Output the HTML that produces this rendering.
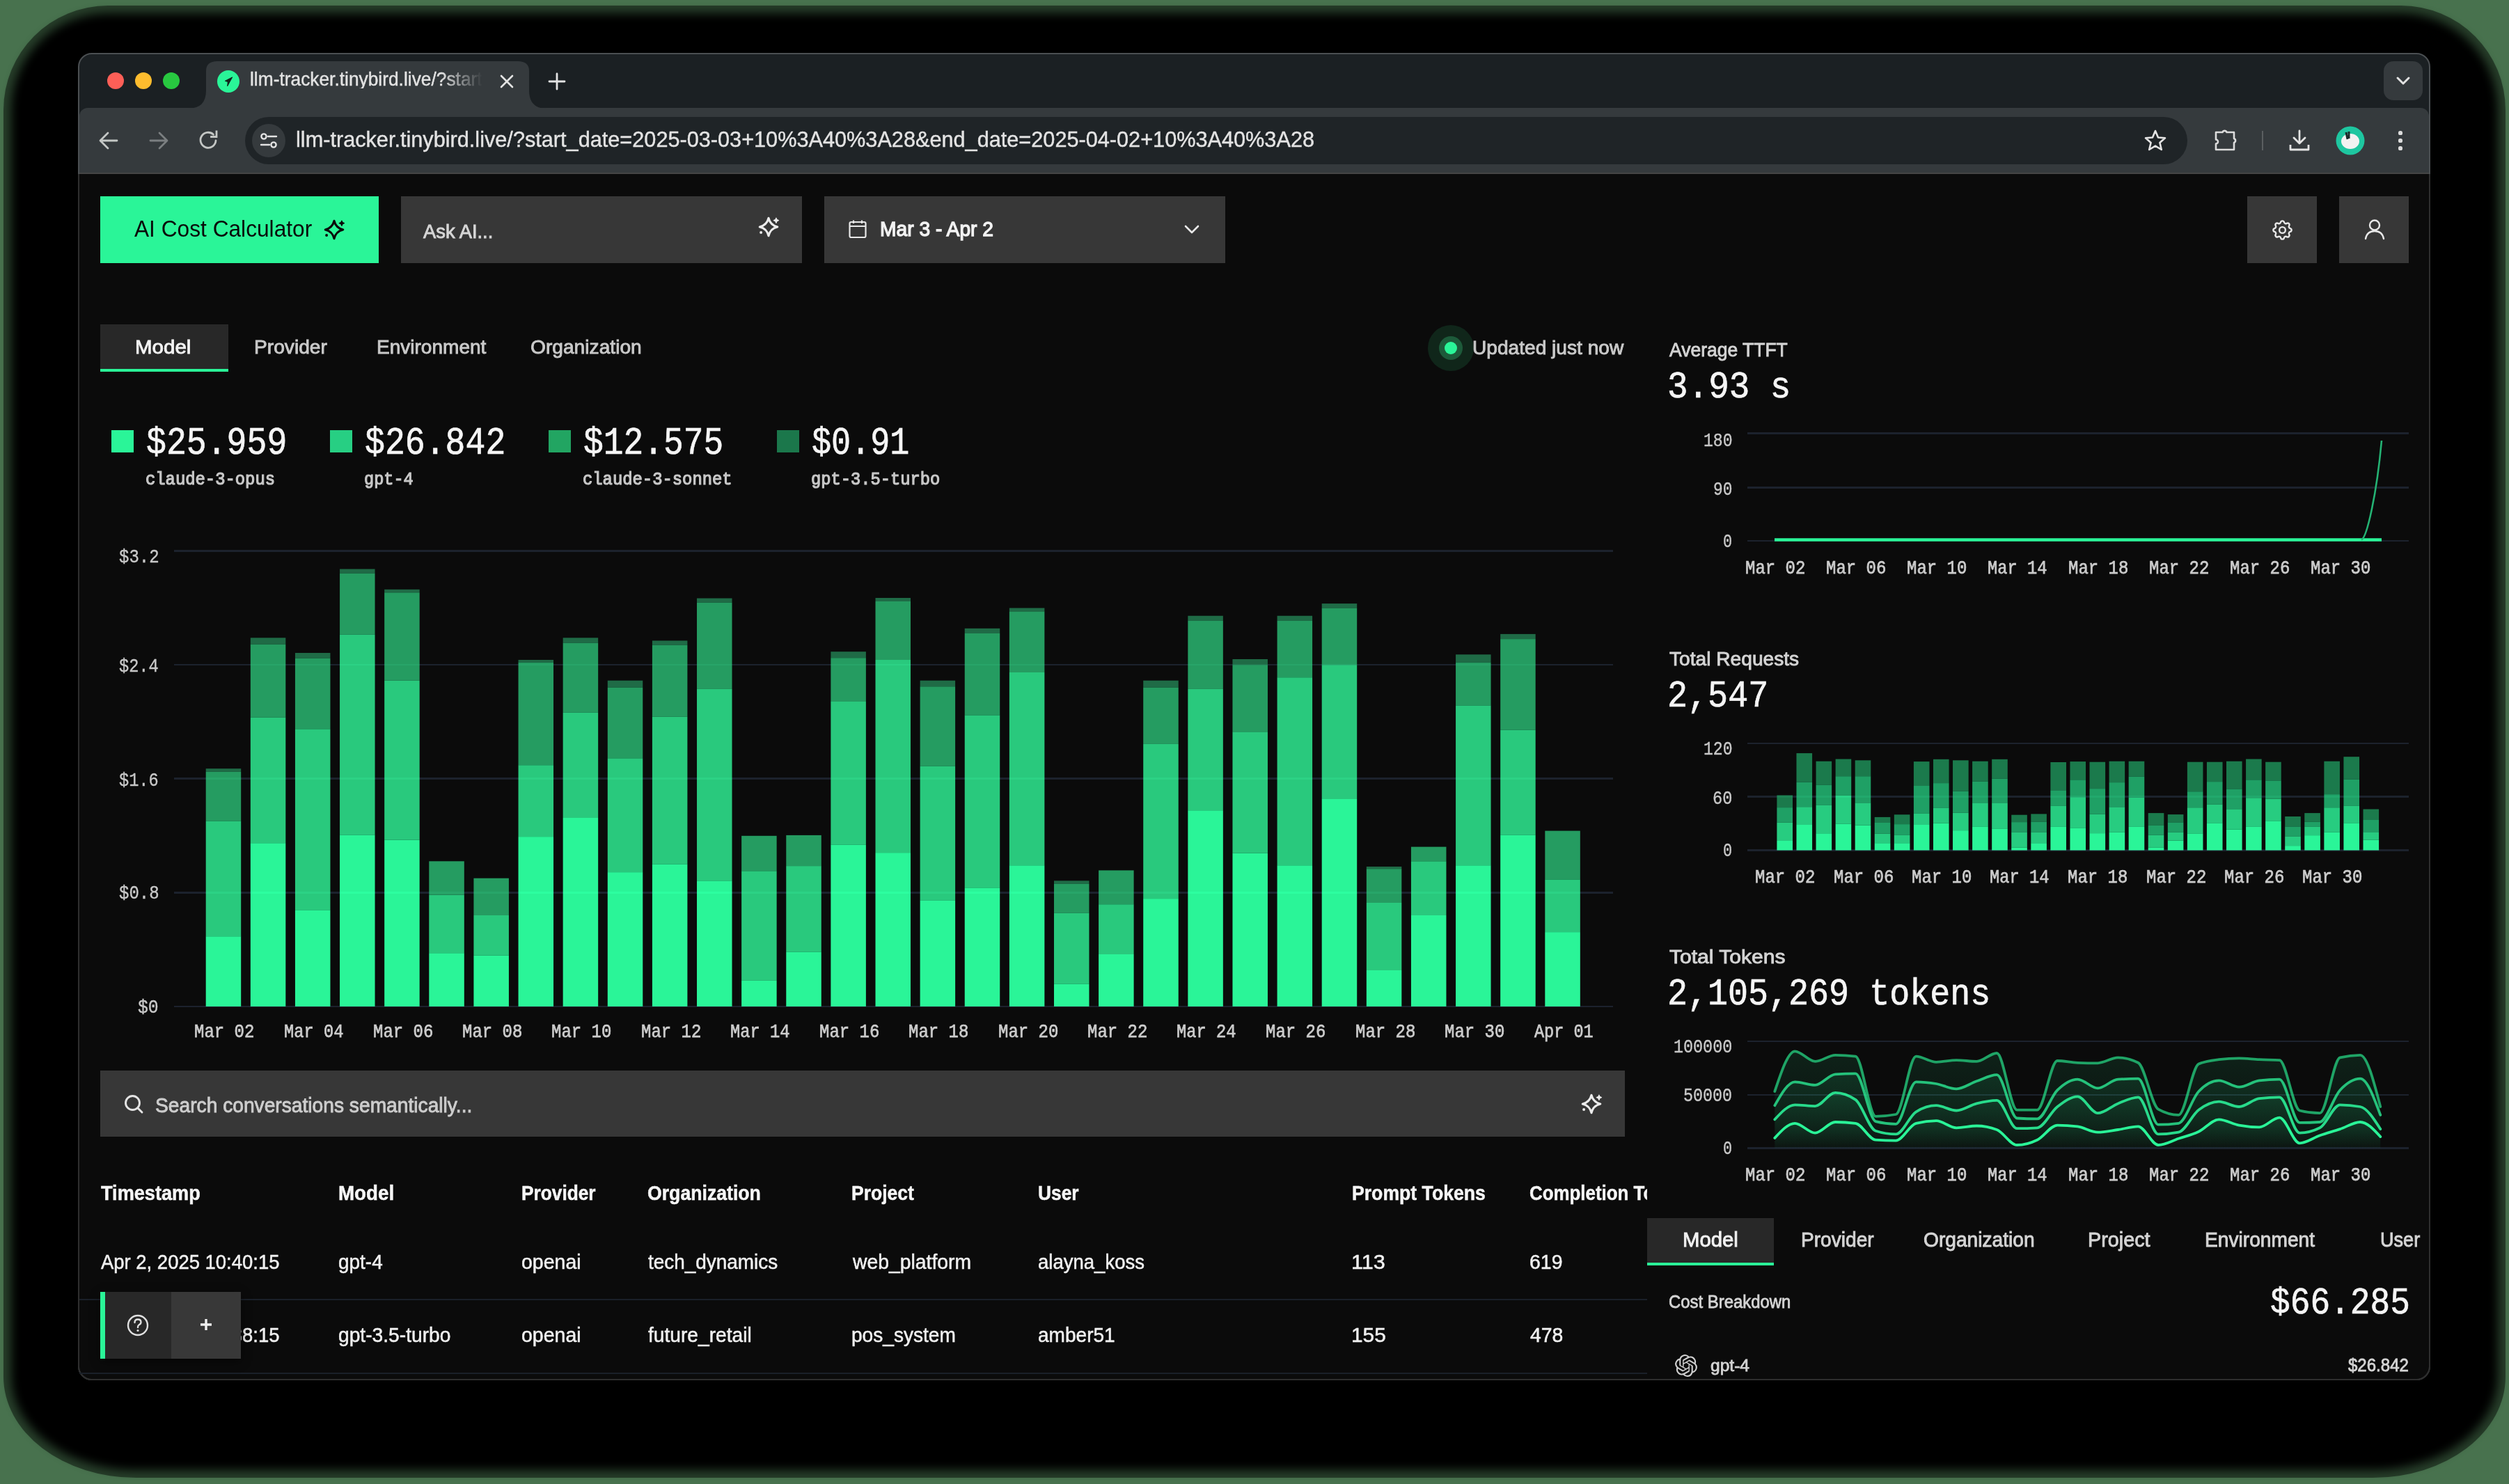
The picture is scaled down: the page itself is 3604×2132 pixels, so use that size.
<!DOCTYPE html>
<html><head><meta charset="utf-8"><title>LLM Tracker</title>
<style>
html,body{margin:0;padding:0;}
body{width:3604px;height:2132px;position:relative;overflow:hidden;background:#48724e;}
</style></head><body>
<div style="position:absolute;left:4.85px;top:8.4px;width:3594.3px;height:2114.6px;background:rgba(0,0,0,0.45);border-radius:150px 150px 190px 190px / 150px 150px 145px 145px"></div>
<div style="position:absolute;left:15.85px;top:19.4px;width:3572.3px;height:2092.6px;background:#000;border-radius:139px 139px 179px 179px / 139px 139px 134px 134px;filter:blur(7px)"></div>
<div style="position:absolute;left:112px;top:76px;width:3379px;height:1907px;background:#1b2023;border-radius:20px;box-sizing:border-box;border:2px solid #4b4f52;overflow:hidden"><div style="position:absolute;left:0;top:77px;right:0;height:95px;background:#353a3d;border-radius:12px 12px 0 0"></div><div style="position:absolute;left:0;top:170px;right:0;height:2px;background:#454545"></div><div style="position:absolute;left:0;top:172px;right:0;bottom:0;background:#0b0b0b"></div></div>
<div style="position:absolute;left:112px;top:250px;width:3379px;height:1733px;box-sizing:border-box;border:2px solid #2e2e2e;border-top:none;border-radius:0 0 20px 20px"></div>
<svg style="position:absolute;left:270px;top:86px;" width="520" height="70" viewBox="0 0 520 70"><path d="M0 70 Q26 70 26 44 L26 16 Q26 2 42 2 L474 2 Q490 2 490 16 L490 44 Q490 70 516 70 Z" fill="#353a3d"/></svg>
<div style="position:absolute;left:154px;top:104px;width:24px;height:24px;border-radius:50%;background:#fe5f57"></div>
<div style="position:absolute;left:194px;top:104px;width:24px;height:24px;border-radius:50%;background:#febc2e"></div>
<div style="position:absolute;left:234px;top:104px;width:24px;height:24px;border-radius:50%;background:#28c840"></div>
<svg style="position:absolute;left:311px;top:99.5px;" width="34" height="34" viewBox="0 0 34 34"><circle cx="17" cy="17" r="16" fill="#2af598"/><path d="M22.7 10.9 L12.3 16.3 L16.3 17.6 L15.7 23.7 Z" fill="#12231b" stroke="#12231b" stroke-width="1" stroke-linejoin="round"/></svg>
<div style="position:absolute;left:359.01px;top:100.68px;font:400 26.72px/26.72px 'Liberation Sans', sans-serif;color:#e3e3e3;white-space:nowrap;transform:scaleX(0.9855);transform-origin:0 0;-webkit-mask-image:linear-gradient(90deg,#000 82%,transparent 100%);-webkit-text-stroke:0.4px #e3e3e3;">llm-tracker.tinybird.live/?start</div>
<svg style="position:absolute;left:716px;top:105px;" width="24" height="24" viewBox="0 0 24 24"><path d="M4 4 L20 20 M20 4 L4 20" stroke="#e3e3e3" stroke-width="2.6" stroke-linecap="round"/></svg>
<svg style="position:absolute;left:787px;top:104px;" width="26" height="26" viewBox="0 0 26 26"><path d="M13 2 V24 M2 13 H24" stroke="#e3e3e3" stroke-width="2.8" stroke-linecap="round"/></svg>
<div style="position:absolute;left:3424px;top:88px;width:56px;height:56px;background:#353a3d;border-radius:14px;"></div>
<svg style="position:absolute;left:3440px;top:106px;" width="24" height="20" viewBox="0 0 24 20"><path d="M4 6 L12 14 L20 6" stroke="#e3e3e3" stroke-width="3" fill="none" stroke-linecap="round" stroke-linejoin="round"/></svg>
<svg style="position:absolute;left:140px;top:186px;" width="32" height="32" viewBox="0 0 32 32"><path d="M28 16 H5 M15 5 L4 16 L15 27" stroke="#c4c7c5" stroke-width="2.8" fill="none" stroke-linecap="round" stroke-linejoin="round"/></svg>
<svg style="position:absolute;left:212px;top:186px;" width="32" height="32" viewBox="0 0 32 32"><path d="M4 16 H27 M17 5 L28 16 L17 27" stroke="#7b7f81" stroke-width="2.8" fill="none" stroke-linecap="round" stroke-linejoin="round"/></svg>
<svg style="position:absolute;left:284px;top:186px;" width="32" height="32" viewBox="0 0 32 32"><path d="M26 16 A11 11 0 1 1 22.5 7.2" stroke="#c4c7c5" stroke-width="2.8" fill="none" stroke-linecap="round"/><path d="M27 3 V10.5 H19.5" stroke="#c4c7c5" stroke-width="2.8" fill="none" stroke-linecap="square"/></svg>
<div style="position:absolute;left:352px;top:168px;width:2790px;height:68px;background:#1f2427;border-radius:34px;"></div>
<div style="position:absolute;left:362px;top:178px;width:48px;height:48px;border-radius:50%;background:#353a3d"></div>
<svg style="position:absolute;left:370px;top:186px;" width="32" height="32" viewBox="0 0 32 32"><circle cx="9" cy="10" r="3.6" stroke="#e3e3e3" stroke-width="2.4" fill="none"/><path d="M15 10 H27" stroke="#e3e3e3" stroke-width="2.4" stroke-linecap="round"/><circle cx="23" cy="22" r="3.6" stroke="#e3e3e3" stroke-width="2.4" fill="none"/><path d="M5 22 H17" stroke="#e3e3e3" stroke-width="2.4" stroke-linecap="round"/></svg>
<div style="position:absolute;left:425.03px;top:184.99px;font:400 31.08px/31.08px 'Liberation Sans', sans-serif;color:#e3e3e3;white-space:nowrap;transform:scaleX(0.9869);transform-origin:0 0;-webkit-text-stroke:0.4px #e3e3e3;">llm-tracker.tinybird.live/?start_date=2025-03-03+10%3A40%3A28&amp;end_date=2025-04-02+10%3A40%3A28</div>
<svg style="position:absolute;left:3078px;top:184px;" width="36" height="36" viewBox="0 0 36 36"><path d="M18 4 L22 13.5 L32 14.3 L24.4 21 L26.8 31 L18 25.6 L9.2 31 L11.6 21 L4 14.3 L14 13.5 Z" stroke="#e3e3e3" stroke-width="2.6" fill="none" stroke-linejoin="round"/></svg>
<svg style="position:absolute;left:3176px;top:182px;" width="40" height="40" viewBox="0 0 40 40"><path d="M7 8 H16.5 A3.2 3.2 0 0 1 22.5 8 H33 V17 A3.2 3.2 0 0 1 33 23 V33 H7 V24.5 A3 3 0 0 0 7 18.5 Z" stroke="#dcdcdc" stroke-width="2.6" fill="none" stroke-linejoin="round"/></svg>
<div style="position:absolute;left:3249px;top:188px;width:2px;height:28px;background:#5a5e60;border-radius:0px;"></div>
<svg style="position:absolute;left:3285px;top:184px;" width="36" height="36" viewBox="0 0 36 36"><path d="M18 4 V22 M10 14 L18 22 L26 14" stroke="#e3e3e3" stroke-width="2.8" fill="none" stroke-linecap="round" stroke-linejoin="round"/><path d="M5 24 V31 H31 V24" stroke="#e3e3e3" stroke-width="2.8" fill="none" stroke-linejoin="round"/></svg>
<svg style="position:absolute;left:3355px;top:181px;" width="42" height="42" viewBox="0 0 42 42"><circle cx="21" cy="21" r="20.5" fill="#1ec6a0"/><ellipse cx="21" cy="22" rx="13" ry="11" fill="#f2f2f2"/><path d="M15 9 L17 19 M19 8 L19 18" stroke="#1a2a2a" stroke-width="3"/></svg>
<div style="position:absolute;left:3445.4px;top:188.4px;width:5.2px;height:5.2px;border-radius:50%;background:#dcdcdc"></div>
<div style="position:absolute;left:3445.4px;top:199.4px;width:5.2px;height:5.2px;border-radius:50%;background:#dcdcdc"></div>
<div style="position:absolute;left:3445.4px;top:210.4px;width:5.2px;height:5.2px;border-radius:50%;background:#dcdcdc"></div>
<div style="position:absolute;left:144px;top:282px;width:400px;height:96px;background:#2af598;border-radius:0px;"></div>
<div style="position:absolute;left:193.00px;top:311.75px;font:400 33.72px/33.72px 'Liberation Sans', sans-serif;color:#0a0a0a;white-space:nowrap;transform:scaleX(0.9392);transform-origin:0 0;">AI Cost Calculator</div>
<svg style="position:absolute;left:459.9px;top:309.9px;" width="40" height="40" viewBox="0 0 40 40"><g transform="translate(20 20)"><path d="M0 -12.8 Q2.4 -2.4 12.8 0 Q2.4 2.4 0 12.8 Q-2.4 2.4 -12.8 0 Q-2.4 -2.4 0 -12.8 Z" stroke="#0a0a0a" stroke-width="3.0" fill="none" stroke-linejoin="round"/><path d="M0 -3.6 Q0.5 -0.5 3.6 0 Q0.5 0.5 0 3.6 Q-0.5 0.5 -3.6 0 Q-0.5 -0.5 0 -3.6 Z" transform="translate(10.9 -9.3)" fill="#0a0a0a" stroke="#0a0a0a" stroke-width="1.2" stroke-linejoin="round"/><circle cx="-10.9" cy="8.1" r="2" fill="#0a0a0a"/></g></svg>
<div style="position:absolute;left:576px;top:282px;width:576px;height:96px;background:#373737;border-radius:0px;"></div>
<div style="position:absolute;left:608.00px;top:317.83px;font:400 28.31px/28.31px 'Liberation Sans', sans-serif;color:#d6d6d6;white-space:nowrap;transform:scaleX(0.9663);transform-origin:0 0;-webkit-text-stroke:0.9px #d6d6d6;">Ask AI...</div>
<svg style="position:absolute;left:1083.9px;top:305.9px;" width="40" height="40" viewBox="0 0 40 40"><g transform="translate(20 20)"><path d="M0 -12.8 Q2.4 -2.4 12.8 0 Q2.4 2.4 0 12.8 Q-2.4 2.4 -12.8 0 Q-2.4 -2.4 0 -12.8 Z" stroke="#ececec" stroke-width="3.0" fill="none" stroke-linejoin="round"/><path d="M0 -3.6 Q0.5 -0.5 3.6 0 Q0.5 0.5 0 3.6 Q-0.5 0.5 -3.6 0 Q-0.5 -0.5 0 -3.6 Z" transform="translate(10.9 -9.3)" fill="#ececec" stroke="#ececec" stroke-width="1.2" stroke-linejoin="round"/><circle cx="-10.9" cy="8.1" r="2" fill="#ececec"/></g></svg>
<div style="position:absolute;left:1184px;top:282px;width:576px;height:96px;background:#373737;border-radius:0px;"></div>
<svg style="position:absolute;left:1218px;top:314px;" width="30" height="30" viewBox="0 0 30 30"><rect x="2.5" y="5" width="23" height="22" rx="2" stroke="#e8e8e8" stroke-width="2.2" fill="none"/><path d="M2.5 11 H25.5 M8 2.5 V7 M20 2.5 V7" stroke="#e8e8e8" stroke-width="2.2"/></svg>
<div style="position:absolute;left:1263.56px;top:315.24px;font:400 29.01px/29.01px 'Liberation Sans', sans-serif;color:#f2f2f2;white-space:nowrap;transform:scaleX(0.9724);transform-origin:0 0;-webkit-text-stroke:1.3px #f2f2f2;">Mar 3 - Apr 2</div>
<svg style="position:absolute;left:1700px;top:320px;" width="24" height="20" viewBox="0 0 24 20"><path d="M3 5 L12 14 L21 5" stroke="#e8e8e8" stroke-width="2.6" fill="none" stroke-linecap="round" stroke-linejoin="round"/></svg>
<div style="position:absolute;left:3228px;top:282px;width:100px;height:96px;background:#373737;border-radius:0px;"></div>
<svg style="position:absolute;left:3261.1px;top:312.5px;" width="35" height="35" viewBox="0 0 35 35"><g transform="scale(1.4583)"><path d="M10.325 4.317c.426 -1.756 2.924 -1.756 3.35 0a1.724 1.724 0 0 0 2.573 1.066c1.543 -.94 3.31 .826 2.37 2.37a1.724 1.724 0 0 0 1.065 2.572c1.756 .426 1.756 2.924 0 3.35a1.724 1.724 0 0 0 -1.066 2.573c.94 1.543 -.826 3.31 -2.37 2.37a1.724 1.724 0 0 0 -2.572 1.065c-.426 1.756 -2.924 1.756 -3.35 0a1.724 1.724 0 0 0 -2.573 -1.066c-1.543 .94 -3.31 -.826 -2.37 -2.37a1.724 1.724 0 0 0 -1.065 -2.572c-1.756 -.426 -1.756 -2.924 0 -3.35a1.724 1.724 0 0 0 1.066 -2.573c-.94 -1.543 .826 -3.31 2.37 -2.37c1 .608 2.296 .07 2.572 -1.065z" stroke="#e8e8e8" stroke-width="1.65" fill="none"/><circle cx="12" cy="12" r="3" stroke="#e8e8e8" stroke-width="1.65" fill="none"/></g></svg>
<div style="position:absolute;left:3360px;top:282px;width:100px;height:96px;background:#373737;border-radius:0px;"></div>
<svg style="position:absolute;left:3394px;top:312px;" width="34" height="34" viewBox="0 0 34 34"><circle cx="17" cy="11.5" r="7" stroke="#e8e8e8" stroke-width="2.4" fill="none"/><path d="M4 31 Q6 20 17 20 Q28 20 30 31" stroke="#e8e8e8" stroke-width="2.4" fill="none" stroke-linecap="round"/></svg>
<div style="position:absolute;left:144px;top:466px;width:184px;height:68px;background:#282828;border-radius:0px;"></div>
<div style="position:absolute;left:144px;top:530px;width:184px;height:4px;background:#2af598;border-radius:0px;"></div>
<div style="position:absolute;left:194.41px;top:484.33px;font:400 28.31px/28.31px 'Liberation Sans', sans-serif;color:#f2f2f2;white-space:nowrap;transform:scaleX(1.0436);transform-origin:0 0;-webkit-text-stroke:0.9px #f2f2f2;">Model</div>
<div style="position:absolute;left:365.01px;top:484.33px;font:400 28.31px/28.31px 'Liberation Sans', sans-serif;color:#c9c9c9;white-space:nowrap;transform:scaleX(0.9957);transform-origin:0 0;-webkit-text-stroke:0.9px #c9c9c9;">Provider</div>
<div style="position:absolute;left:540.52px;top:484.33px;font:400 28.31px/28.31px 'Liberation Sans', sans-serif;color:#c9c9c9;white-space:nowrap;transform:scaleX(0.9905);transform-origin:0 0;-webkit-text-stroke:0.9px #c9c9c9;">Environment</div>
<div style="position:absolute;left:762.00px;top:484.33px;font:400 28.31px/28.31px 'Liberation Sans', sans-serif;color:#c9c9c9;white-space:nowrap;transform:scaleX(0.9955);transform-origin:0 0;-webkit-text-stroke:0.9px #c9c9c9;">Organization</div>
<div style="position:absolute;left:2050.5px;top:467px;width:66px;height:66px;border-radius:50%;background:#10261a"></div>
<div style="position:absolute;left:2066.5px;top:483px;width:34px;height:34px;border-radius:50%;background:#1d5a3a"></div>
<div style="position:absolute;left:2074.5px;top:491px;width:18px;height:18px;border-radius:50%;background:#2af598"></div>
<div style="position:absolute;left:2114.98px;top:485.90px;font:400 27.88px/27.88px 'Liberation Sans', sans-serif;color:#c9c9c9;white-space:nowrap;transform:scaleX(1.0086);transform-origin:0 0;-webkit-text-stroke:0.9px #c9c9c9;">Updated just now</div>
<div style="position:absolute;left:160px;top:618px;width:32px;height:32px;background:#2af598;border-radius:0px;"></div>
<div style="position:absolute;left:209.62px;top:611.15px;font:400 54.63px/54.63px 'Liberation Mono', monospace;color:#f5f5f5;white-space:nowrap;transform:scaleX(0.8815);transform-origin:0 0;-webkit-text-stroke:0.7px #f5f5f5;">$25.959</div>
<div style="position:absolute;left:208.60px;top:676.16px;font:400 26.56px/26.56px 'Liberation Mono', monospace;color:#c8c8c8;white-space:nowrap;transform:scaleX(0.8983);transform-origin:0 0;-webkit-text-stroke:1.2px #c8c8c8;">claude-3-opus</div>
<div style="position:absolute;left:474px;top:618px;width:32px;height:32px;background:#27cf83;border-radius:0px;"></div>
<div style="position:absolute;left:523.62px;top:611.15px;font:400 54.63px/54.63px 'Liberation Mono', monospace;color:#f5f5f5;white-space:nowrap;transform:scaleX(0.8815);transform-origin:0 0;-webkit-text-stroke:0.7px #f5f5f5;">$26.842</div>
<div style="position:absolute;left:522.61px;top:676.16px;font:400 26.56px/26.56px 'Liberation Mono', monospace;color:#c8c8c8;white-space:nowrap;transform:scaleX(0.8878);transform-origin:0 0;-webkit-text-stroke:1.2px #c8c8c8;">gpt-4</div>
<div style="position:absolute;left:788px;top:618px;width:32px;height:32px;background:#22a562;border-radius:0px;"></div>
<div style="position:absolute;left:837.62px;top:611.15px;font:400 54.63px/54.63px 'Liberation Mono', monospace;color:#f5f5f5;white-space:nowrap;transform:scaleX(0.8776);transform-origin:0 0;-webkit-text-stroke:0.7px #f5f5f5;">$12.575</div>
<div style="position:absolute;left:836.60px;top:676.16px;font:400 26.56px/26.56px 'Liberation Mono', monospace;color:#c8c8c8;white-space:nowrap;transform:scaleX(0.8982);transform-origin:0 0;-webkit-text-stroke:1.2px #c8c8c8;">claude-3-sonnet</div>
<div style="position:absolute;left:1116px;top:618px;width:32px;height:32px;background:#1b774b;border-radius:0px;"></div>
<div style="position:absolute;left:1165.64px;top:611.15px;font:400 54.63px/54.63px 'Liberation Mono', monospace;color:#f5f5f5;white-space:nowrap;transform:scaleX(0.8567);transform-origin:0 0;-webkit-text-stroke:0.7px #f5f5f5;">$0.91</div>
<div style="position:absolute;left:1164.61px;top:676.16px;font:400 26.56px/26.56px 'Liberation Mono', monospace;color:#c8c8c8;white-space:nowrap;transform:scaleX(0.8939);transform-origin:0 0;-webkit-text-stroke:1.2px #c8c8c8;">gpt-3.5-turbo</div>
<div style="position:absolute;left:171.00px;top:786.79px;font:400 28.07px/28.07px 'Liberation Mono', monospace;color:#c8c8c8;white-space:nowrap;transform:scaleX(0.8547);transform-origin:0 0;-webkit-text-stroke:0.4px #c8c8c8;">$3.2</div>
<div style="position:absolute;left:171.00px;top:943.99px;font:400 28.07px/28.07px 'Liberation Mono', monospace;color:#c8c8c8;white-space:nowrap;transform:scaleX(0.8418);transform-origin:0 0;-webkit-text-stroke:0.4px #c8c8c8;">$2.4</div>
<div style="position:absolute;left:171.00px;top:1107.99px;font:400 28.07px/28.07px 'Liberation Mono', monospace;color:#c8c8c8;white-space:nowrap;transform:scaleX(0.8418);transform-origin:0 0;-webkit-text-stroke:0.4px #c8c8c8;">$1.6</div>
<div style="position:absolute;left:171.00px;top:1269.79px;font:400 28.07px/28.07px 'Liberation Mono', monospace;color:#c8c8c8;white-space:nowrap;transform:scaleX(0.8547);transform-origin:0 0;-webkit-text-stroke:0.4px #c8c8c8;">$0.8</div>
<div style="position:absolute;left:198.00px;top:1434.49px;font:400 28.07px/28.07px 'Liberation Mono', monospace;color:#c8c8c8;white-space:nowrap;transform:scaleX(0.8831);transform-origin:0 0;-webkit-text-stroke:0.4px #c8c8c8;">$0</div>
<div style="position:absolute;left:250px;top:790.25px;width:2067px;height:2.5px;background:rgb(25,25,37);border-radius:0px;"></div>
<div style="position:absolute;left:250px;top:953.85px;width:2067px;height:2.5px;background:rgb(25,25,37);border-radius:0px;"></div>
<div style="position:absolute;left:250px;top:1117.45px;width:2067px;height:2.5px;background:rgb(25,25,37);border-radius:0px;"></div>
<div style="position:absolute;left:250px;top:1281.05px;width:2067px;height:2.5px;background:rgb(25,25,37);border-radius:0px;"></div>
<div style="position:absolute;left:250px;top:1444.65px;width:2067px;height:2.5px;background:rgb(25,25,37);border-radius:0px;"></div>
<svg style="position:absolute;left:250px;top:780px;" width="2070" height="670" viewBox="0 0 2070 670"><rect x="45.70" y="324.20" width="50.5" height="4.50" fill="#1f6b46"/><rect x="45.70" y="328.70" width="50.5" height="70.80" fill="#259c61"/><rect x="45.70" y="399.50" width="50.5" height="165.70" fill="#29c97d"/><rect x="45.70" y="565.20" width="50.5" height="100.70" fill="#2af598"/><rect x="109.82" y="136.30" width="50.5" height="9.50" fill="#1f6b46"/><rect x="109.82" y="145.80" width="50.5" height="104.80" fill="#259c61"/><rect x="109.82" y="250.60" width="50.5" height="180.60" fill="#29c97d"/><rect x="109.82" y="431.20" width="50.5" height="234.70" fill="#2af598"/><rect x="173.94" y="158.00" width="50.5" height="7.70" fill="#1f6b46"/><rect x="173.94" y="165.70" width="50.5" height="101.60" fill="#259c61"/><rect x="173.94" y="267.30" width="50.5" height="260.00" fill="#29c97d"/><rect x="173.94" y="527.30" width="50.5" height="138.60" fill="#2af598"/><rect x="238.06" y="37.50" width="50.5" height="6.30" fill="#1f6b46"/><rect x="238.06" y="43.80" width="50.5" height="88.00" fill="#259c61"/><rect x="238.06" y="131.80" width="50.5" height="287.60" fill="#29c97d"/><rect x="238.06" y="419.40" width="50.5" height="246.50" fill="#2af598"/><rect x="302.18" y="66.80" width="50.5" height="4.50" fill="#1f6b46"/><rect x="302.18" y="71.30" width="50.5" height="126.40" fill="#259c61"/><rect x="302.18" y="197.70" width="50.5" height="228.90" fill="#29c97d"/><rect x="302.18" y="426.60" width="50.5" height="239.30" fill="#2af598"/><rect x="366.30" y="457.30" width="50.5" height="48.30" fill="#259c61"/><rect x="366.30" y="505.60" width="50.5" height="83.60" fill="#29c97d"/><rect x="366.30" y="589.20" width="50.5" height="76.70" fill="#2af598"/><rect x="430.42" y="481.70" width="50.5" height="53.30" fill="#259c61"/><rect x="430.42" y="535.00" width="50.5" height="57.80" fill="#29c97d"/><rect x="430.42" y="592.80" width="50.5" height="73.10" fill="#2af598"/><rect x="494.54" y="168.00" width="50.5" height="3.60" fill="#1f6b46"/><rect x="494.54" y="171.60" width="50.5" height="147.60" fill="#259c61"/><rect x="494.54" y="319.20" width="50.5" height="102.90" fill="#29c97d"/><rect x="494.54" y="422.10" width="50.5" height="243.80" fill="#2af598"/><rect x="558.66" y="136.30" width="50.5" height="7.30" fill="#1f6b46"/><rect x="558.66" y="143.60" width="50.5" height="100.20" fill="#259c61"/><rect x="558.66" y="243.80" width="50.5" height="151.20" fill="#29c97d"/><rect x="558.66" y="395.00" width="50.5" height="270.90" fill="#2af598"/><rect x="622.78" y="197.70" width="50.5" height="10.00" fill="#1f6b46"/><rect x="622.78" y="207.70" width="50.5" height="101.60" fill="#259c61"/><rect x="622.78" y="309.30" width="50.5" height="163.80" fill="#29c97d"/><rect x="622.78" y="473.10" width="50.5" height="192.80" fill="#2af598"/><rect x="686.90" y="140.40" width="50.5" height="6.30" fill="#1f6b46"/><rect x="686.90" y="146.70" width="50.5" height="103.00" fill="#259c61"/><rect x="686.90" y="249.70" width="50.5" height="211.70" fill="#29c97d"/><rect x="686.90" y="461.40" width="50.5" height="204.50" fill="#2af598"/><rect x="751.02" y="79.50" width="50.5" height="6.30" fill="#1f6b46"/><rect x="751.02" y="85.80" width="50.5" height="124.10" fill="#259c61"/><rect x="751.02" y="209.90" width="50.5" height="275.40" fill="#29c97d"/><rect x="751.02" y="485.30" width="50.5" height="180.60" fill="#2af598"/><rect x="815.14" y="420.80" width="50.5" height="50.50" fill="#259c61"/><rect x="815.14" y="471.30" width="50.5" height="157.60" fill="#29c97d"/><rect x="815.14" y="628.90" width="50.5" height="37.00" fill="#2af598"/><rect x="879.26" y="419.90" width="50.5" height="44.20" fill="#259c61"/><rect x="879.26" y="464.10" width="50.5" height="123.30" fill="#29c97d"/><rect x="879.26" y="587.40" width="50.5" height="78.50" fill="#2af598"/><rect x="943.38" y="156.20" width="50.5" height="9.00" fill="#1f6b46"/><rect x="943.38" y="165.20" width="50.5" height="62.80" fill="#259c61"/><rect x="943.38" y="228.00" width="50.5" height="205.40" fill="#29c97d"/><rect x="943.38" y="433.40" width="50.5" height="232.50" fill="#2af598"/><rect x="1007.50" y="79.00" width="50.5" height="5.00" fill="#1f6b46"/><rect x="1007.50" y="84.00" width="50.5" height="84.00" fill="#259c61"/><rect x="1007.50" y="168.00" width="50.5" height="277.10" fill="#29c97d"/><rect x="1007.50" y="445.10" width="50.5" height="220.80" fill="#2af598"/><rect x="1071.62" y="197.70" width="50.5" height="8.60" fill="#1f6b46"/><rect x="1071.62" y="206.30" width="50.5" height="114.20" fill="#259c61"/><rect x="1071.62" y="320.50" width="50.5" height="192.80" fill="#29c97d"/><rect x="1071.62" y="513.30" width="50.5" height="152.60" fill="#2af598"/><rect x="1135.74" y="122.80" width="50.5" height="7.20" fill="#1f6b46"/><rect x="1135.74" y="130.00" width="50.5" height="117.40" fill="#259c61"/><rect x="1135.74" y="247.40" width="50.5" height="247.90" fill="#29c97d"/><rect x="1135.74" y="495.30" width="50.5" height="170.60" fill="#2af598"/><rect x="1199.86" y="93.50" width="50.5" height="4.90" fill="#1f6b46"/><rect x="1199.86" y="98.40" width="50.5" height="87.60" fill="#259c61"/><rect x="1199.86" y="186.00" width="50.5" height="277.20" fill="#29c97d"/><rect x="1199.86" y="463.20" width="50.5" height="202.70" fill="#2af598"/><rect x="1263.98" y="485.30" width="50.5" height="4.60" fill="#1f6b46"/><rect x="1263.98" y="489.90" width="50.5" height="41.90" fill="#259c61"/><rect x="1263.98" y="531.80" width="50.5" height="101.60" fill="#29c97d"/><rect x="1263.98" y="633.40" width="50.5" height="32.50" fill="#2af598"/><rect x="1328.10" y="470.40" width="50.5" height="48.80" fill="#259c61"/><rect x="1328.10" y="519.20" width="50.5" height="71.80" fill="#29c97d"/><rect x="1328.10" y="591.00" width="50.5" height="74.90" fill="#2af598"/><rect x="1392.22" y="197.70" width="50.5" height="10.00" fill="#1f6b46"/><rect x="1392.22" y="207.70" width="50.5" height="81.20" fill="#259c61"/><rect x="1392.22" y="288.90" width="50.5" height="222.20" fill="#29c97d"/><rect x="1392.22" y="511.10" width="50.5" height="154.80" fill="#2af598"/><rect x="1456.34" y="104.70" width="50.5" height="6.80" fill="#1f6b46"/><rect x="1456.34" y="111.50" width="50.5" height="98.40" fill="#259c61"/><rect x="1456.34" y="209.90" width="50.5" height="174.30" fill="#29c97d"/><rect x="1456.34" y="384.20" width="50.5" height="281.70" fill="#2af598"/><rect x="1520.46" y="167.00" width="50.5" height="8.20" fill="#1f6b46"/><rect x="1520.46" y="175.20" width="50.5" height="96.10" fill="#259c61"/><rect x="1520.46" y="271.30" width="50.5" height="174.30" fill="#29c97d"/><rect x="1520.46" y="445.60" width="50.5" height="220.30" fill="#2af598"/><rect x="1584.58" y="104.70" width="50.5" height="6.80" fill="#1f6b46"/><rect x="1584.58" y="111.50" width="50.5" height="81.70" fill="#259c61"/><rect x="1584.58" y="193.20" width="50.5" height="270.00" fill="#29c97d"/><rect x="1584.58" y="463.20" width="50.5" height="202.70" fill="#2af598"/><rect x="1648.70" y="87.10" width="50.5" height="6.40" fill="#1f6b46"/><rect x="1648.70" y="93.50" width="50.5" height="81.70" fill="#259c61"/><rect x="1648.70" y="175.20" width="50.5" height="192.80" fill="#29c97d"/><rect x="1648.70" y="368.00" width="50.5" height="297.90" fill="#2af598"/><rect x="1712.82" y="465.00" width="50.5" height="3.20" fill="#1f6b46"/><rect x="1712.82" y="468.20" width="50.5" height="48.80" fill="#259c61"/><rect x="1712.82" y="517.00" width="50.5" height="97.00" fill="#29c97d"/><rect x="1712.82" y="614.00" width="50.5" height="51.90" fill="#2af598"/><rect x="1776.94" y="436.60" width="50.5" height="20.70" fill="#259c61"/><rect x="1776.94" y="457.30" width="50.5" height="77.70" fill="#29c97d"/><rect x="1776.94" y="535.00" width="50.5" height="130.90" fill="#2af598"/><rect x="1841.06" y="160.30" width="50.5" height="11.30" fill="#1f6b46"/><rect x="1841.06" y="171.60" width="50.5" height="61.80" fill="#259c61"/><rect x="1841.06" y="233.40" width="50.5" height="229.80" fill="#29c97d"/><rect x="1841.06" y="463.20" width="50.5" height="202.70" fill="#2af598"/><rect x="1905.18" y="130.90" width="50.5" height="7.20" fill="#1f6b46"/><rect x="1905.18" y="138.10" width="50.5" height="130.50" fill="#259c61"/><rect x="1905.18" y="268.60" width="50.5" height="150.80" fill="#29c97d"/><rect x="1905.18" y="419.40" width="50.5" height="246.50" fill="#2af598"/><rect x="1969.30" y="413.60" width="50.5" height="69.80" fill="#259c61"/><rect x="1969.30" y="483.40" width="50.5" height="75.70" fill="#29c97d"/><rect x="1969.30" y="559.10" width="50.5" height="106.80" fill="#2af598"/></svg>
<div style="position:absolute;left:250px;top:790.25px;width:2067px;height:2.5px;background:rgb(3,9,8);border-radius:0px;mix-blend-mode:plus-lighter;"></div>
<div style="position:absolute;left:250px;top:953.85px;width:2067px;height:2.5px;background:rgb(3,9,8);border-radius:0px;mix-blend-mode:plus-lighter;"></div>
<div style="position:absolute;left:250px;top:1117.45px;width:2067px;height:2.5px;background:rgb(3,9,8);border-radius:0px;mix-blend-mode:plus-lighter;"></div>
<div style="position:absolute;left:250px;top:1281.05px;width:2067px;height:2.5px;background:rgb(3,9,8);border-radius:0px;mix-blend-mode:plus-lighter;"></div>
<div style="position:absolute;left:250px;top:1444.65px;width:2067px;height:2.5px;background:rgb(3,9,8);border-radius:0px;mix-blend-mode:plus-lighter;"></div>
<div style="position:absolute;left:279.39px;top:1468.73px;font:400 27.77px/27.77px 'Liberation Mono', monospace;color:#cccccc;white-space:nowrap;transform:scaleX(0.8636);transform-origin:0 0;-webkit-text-stroke:0.75px #cccccc;">Mar 02</div>
<div style="position:absolute;left:407.64px;top:1468.73px;font:400 27.77px/27.77px 'Liberation Mono', monospace;color:#cccccc;white-space:nowrap;transform:scaleX(0.8548);transform-origin:0 0;-webkit-text-stroke:0.75px #cccccc;">Mar 04</div>
<div style="position:absolute;left:535.87px;top:1468.73px;font:400 27.77px/27.77px 'Liberation Mono', monospace;color:#cccccc;white-space:nowrap;transform:scaleX(0.8636);transform-origin:0 0;-webkit-text-stroke:0.75px #cccccc;">Mar 06</div>
<div style="position:absolute;left:664.11px;top:1468.73px;font:400 27.77px/27.77px 'Liberation Mono', monospace;color:#cccccc;white-space:nowrap;transform:scaleX(0.8636);transform-origin:0 0;-webkit-text-stroke:0.75px #cccccc;">Mar 08</div>
<div style="position:absolute;left:792.35px;top:1468.73px;font:400 27.77px/27.77px 'Liberation Mono', monospace;color:#cccccc;white-space:nowrap;transform:scaleX(0.8636);transform-origin:0 0;-webkit-text-stroke:0.75px #cccccc;">Mar 10</div>
<div style="position:absolute;left:920.59px;top:1468.73px;font:400 27.77px/27.77px 'Liberation Mono', monospace;color:#cccccc;white-space:nowrap;transform:scaleX(0.8636);transform-origin:0 0;-webkit-text-stroke:0.75px #cccccc;">Mar 12</div>
<div style="position:absolute;left:1048.84px;top:1468.73px;font:400 27.77px/27.77px 'Liberation Mono', monospace;color:#cccccc;white-space:nowrap;transform:scaleX(0.8548);transform-origin:0 0;-webkit-text-stroke:0.75px #cccccc;">Mar 14</div>
<div style="position:absolute;left:1177.07px;top:1468.73px;font:400 27.77px/27.77px 'Liberation Mono', monospace;color:#cccccc;white-space:nowrap;transform:scaleX(0.8636);transform-origin:0 0;-webkit-text-stroke:0.75px #cccccc;">Mar 16</div>
<div style="position:absolute;left:1305.31px;top:1468.73px;font:400 27.77px/27.77px 'Liberation Mono', monospace;color:#cccccc;white-space:nowrap;transform:scaleX(0.8636);transform-origin:0 0;-webkit-text-stroke:0.75px #cccccc;">Mar 18</div>
<div style="position:absolute;left:1433.55px;top:1468.73px;font:400 27.77px/27.77px 'Liberation Mono', monospace;color:#cccccc;white-space:nowrap;transform:scaleX(0.8636);transform-origin:0 0;-webkit-text-stroke:0.75px #cccccc;">Mar 20</div>
<div style="position:absolute;left:1561.79px;top:1468.73px;font:400 27.77px/27.77px 'Liberation Mono', monospace;color:#cccccc;white-space:nowrap;transform:scaleX(0.8636);transform-origin:0 0;-webkit-text-stroke:0.75px #cccccc;">Mar 22</div>
<div style="position:absolute;left:1690.04px;top:1468.73px;font:400 27.77px/27.77px 'Liberation Mono', monospace;color:#cccccc;white-space:nowrap;transform:scaleX(0.8548);transform-origin:0 0;-webkit-text-stroke:0.75px #cccccc;">Mar 24</div>
<div style="position:absolute;left:1818.27px;top:1468.73px;font:400 27.77px/27.77px 'Liberation Mono', monospace;color:#cccccc;white-space:nowrap;transform:scaleX(0.8636);transform-origin:0 0;-webkit-text-stroke:0.75px #cccccc;">Mar 26</div>
<div style="position:absolute;left:1946.51px;top:1468.73px;font:400 27.77px/27.77px 'Liberation Mono', monospace;color:#cccccc;white-space:nowrap;transform:scaleX(0.8636);transform-origin:0 0;-webkit-text-stroke:0.75px #cccccc;">Mar 28</div>
<div style="position:absolute;left:2074.75px;top:1468.73px;font:400 27.77px/27.77px 'Liberation Mono', monospace;color:#cccccc;white-space:nowrap;transform:scaleX(0.8636);transform-origin:0 0;-webkit-text-stroke:0.75px #cccccc;">Mar 30</div>
<div style="position:absolute;left:2203.85px;top:1468.73px;font:400 27.77px/27.77px 'Liberation Mono', monospace;color:#cccccc;white-space:nowrap;transform:scaleX(0.8462);transform-origin:0 0;-webkit-text-stroke:0.75px #cccccc;">Apr 01</div>
<div style="position:absolute;left:2398.00px;top:488.33px;font:400 28.31px/28.31px 'Liberation Sans', sans-serif;color:#d4d4d4;white-space:nowrap;transform:scaleX(0.9361);transform-origin:0 0;-webkit-text-stroke:0.9px #d4d4d4;">Average TTFT</div>
<div style="position:absolute;left:2395.22px;top:531.31px;font:400 53.11px/53.11px 'Liberation Mono', monospace;color:#f5f5f5;white-space:nowrap;transform:scaleX(0.9276);transform-origin:0 0;-webkit-text-stroke:0.7px #f5f5f5;">3.93 s</div>
<div style="position:absolute;left:2510px;top:621.45px;width:950px;height:2.5px;background:#1c222d;border-radius:0px;"></div>
<div style="position:absolute;left:2510px;top:699.15px;width:950px;height:2.5px;background:#1c222d;border-radius:0px;"></div>
<div style="position:absolute;left:2510px;top:775.95px;width:950px;height:2.5px;background:#1c222d;border-radius:0px;"></div>
<div style="position:absolute;left:2446.55px;top:620.07px;font:400 27.31px/27.31px 'Liberation Mono', monospace;color:#c8c8c8;white-space:nowrap;transform:scaleX(0.8468);transform-origin:0 0;-webkit-text-stroke:0.4px #c8c8c8;">180</div>
<div style="position:absolute;left:2460.76px;top:689.87px;font:400 27.31px/27.31px 'Liberation Mono', monospace;color:#c8c8c8;white-space:nowrap;transform:scaleX(0.8361);transform-origin:0 0;-webkit-text-stroke:0.4px #c8c8c8;">90</div>
<div style="position:absolute;left:2475.00px;top:765.07px;font:400 27.31px/27.31px 'Liberation Mono', monospace;color:#c8c8c8;white-space:nowrap;transform:scaleX(0.8000);transform-origin:0 0;-webkit-text-stroke:0.4px #c8c8c8;">0</div>
<svg style="position:absolute;left:2500px;top:600px;" width="960" height="200" viewBox="0 0 960 200"><path d="M49 175.5 L921 175.5" stroke="#2af598" stroke-width="4.5" fill="none"/><path d="M892 175.5 C900 172 914 110 921 33" stroke="#24b374" stroke-width="2.6" fill="none"/></svg>
<div style="position:absolute;left:2507.34px;top:803.03px;font:400 27.77px/27.77px 'Liberation Mono', monospace;color:#cccccc;white-space:nowrap;transform:scaleX(0.8636);transform-origin:0 0;-webkit-text-stroke:0.75px #cccccc;">Mar 02</div>
<div style="position:absolute;left:2623.24px;top:803.03px;font:400 27.77px/27.77px 'Liberation Mono', monospace;color:#cccccc;white-space:nowrap;transform:scaleX(0.8636);transform-origin:0 0;-webkit-text-stroke:0.75px #cccccc;">Mar 06</div>
<div style="position:absolute;left:2739.14px;top:803.03px;font:400 27.77px/27.77px 'Liberation Mono', monospace;color:#cccccc;white-space:nowrap;transform:scaleX(0.8636);transform-origin:0 0;-webkit-text-stroke:0.75px #cccccc;">Mar 10</div>
<div style="position:absolute;left:2855.05px;top:803.03px;font:400 27.77px/27.77px 'Liberation Mono', monospace;color:#cccccc;white-space:nowrap;transform:scaleX(0.8548);transform-origin:0 0;-webkit-text-stroke:0.75px #cccccc;">Mar 14</div>
<div style="position:absolute;left:2970.94px;top:803.03px;font:400 27.77px/27.77px 'Liberation Mono', monospace;color:#cccccc;white-space:nowrap;transform:scaleX(0.8636);transform-origin:0 0;-webkit-text-stroke:0.75px #cccccc;">Mar 18</div>
<div style="position:absolute;left:3086.84px;top:803.03px;font:400 27.77px/27.77px 'Liberation Mono', monospace;color:#cccccc;white-space:nowrap;transform:scaleX(0.8636);transform-origin:0 0;-webkit-text-stroke:0.75px #cccccc;">Mar 22</div>
<div style="position:absolute;left:3202.74px;top:803.03px;font:400 27.77px/27.77px 'Liberation Mono', monospace;color:#cccccc;white-space:nowrap;transform:scaleX(0.8636);transform-origin:0 0;-webkit-text-stroke:0.75px #cccccc;">Mar 26</div>
<div style="position:absolute;left:3318.64px;top:803.03px;font:400 27.77px/27.77px 'Liberation Mono', monospace;color:#cccccc;white-space:nowrap;transform:scaleX(0.8636);transform-origin:0 0;-webkit-text-stroke:0.75px #cccccc;">Mar 30</div>
<div style="position:absolute;left:2398.00px;top:932.33px;font:400 28.31px/28.31px 'Liberation Sans', sans-serif;color:#d4d4d4;white-space:nowrap;transform:scaleX(0.9945);transform-origin:0 0;-webkit-text-stroke:0.9px #d4d4d4;">Total Requests</div>
<div style="position:absolute;left:2395.27px;top:975.31px;font:400 53.11px/53.11px 'Liberation Mono', monospace;color:#f5f5f5;white-space:nowrap;transform:scaleX(0.9116);transform-origin:0 0;-webkit-text-stroke:0.7px #f5f5f5;">2,547</div>
<div style="position:absolute;left:2446.55px;top:1063.07px;font:400 27.31px/27.31px 'Liberation Mono', monospace;color:#c8c8c8;white-space:nowrap;transform:scaleX(0.8468);transform-origin:0 0;-webkit-text-stroke:0.4px #c8c8c8;">120</div>
<div style="position:absolute;left:2459.87px;top:1133.57px;font:400 27.31px/27.31px 'Liberation Mono', monospace;color:#c8c8c8;white-space:nowrap;transform:scaleX(0.8645);transform-origin:0 0;-webkit-text-stroke:0.4px #c8c8c8;">60</div>
<div style="position:absolute;left:2475.00px;top:1209.07px;font:400 27.31px/27.31px 'Liberation Mono', monospace;color:#c8c8c8;white-space:nowrap;transform:scaleX(0.8000);transform-origin:0 0;-webkit-text-stroke:0.4px #c8c8c8;">0</div>
<div style="position:absolute;left:2510px;top:1066.75px;width:950px;height:2.5px;background:rgb(25,25,37);border-radius:0px;"></div>
<div style="position:absolute;left:2510px;top:1143.45px;width:950px;height:2.5px;background:rgb(25,25,37);border-radius:0px;"></div>
<div style="position:absolute;left:2510px;top:1220.25px;width:950px;height:2.5px;background:rgb(25,25,37);border-radius:0px;"></div>
<svg style="position:absolute;left:2500px;top:1050px;" width="960" height="180" viewBox="0 0 960 180"><rect x="52.40" y="92.50" width="22.6" height="17.60" fill="#1b7a4c"/><rect x="52.40" y="110.10" width="22.6" height="21.50" fill="#1fa065"/><rect x="52.40" y="131.60" width="22.6" height="26.40" fill="#27cc80"/><rect x="52.40" y="158.00" width="22.6" height="13.50" fill="#2af598"/><rect x="80.47" y="32.10" width="22.6" height="41.60" fill="#1b7a4c"/><rect x="80.47" y="73.70" width="22.6" height="35.50" fill="#1fa065"/><rect x="80.47" y="109.20" width="22.6" height="25.80" fill="#27cc80"/><rect x="80.47" y="135.00" width="22.6" height="36.50" fill="#2af598"/><rect x="108.54" y="43.70" width="22.6" height="34.10" fill="#1b7a4c"/><rect x="108.54" y="77.80" width="22.6" height="29.10" fill="#1fa065"/><rect x="108.54" y="106.90" width="22.6" height="40.30" fill="#27cc80"/><rect x="108.54" y="147.20" width="22.6" height="24.30" fill="#2af598"/><rect x="136.61" y="40.50" width="22.6" height="24.70" fill="#1b7a4c"/><rect x="136.61" y="65.20" width="22.6" height="27.70" fill="#1fa065"/><rect x="136.61" y="92.90" width="22.6" height="40.50" fill="#27cc80"/><rect x="136.61" y="133.40" width="22.6" height="38.10" fill="#2af598"/><rect x="164.68" y="42.30" width="22.6" height="22.90" fill="#1b7a4c"/><rect x="164.68" y="65.20" width="22.6" height="38.10" fill="#1fa065"/><rect x="164.68" y="103.30" width="22.6" height="32.20" fill="#27cc80"/><rect x="164.68" y="135.50" width="22.6" height="36.00" fill="#2af598"/><rect x="192.75" y="123.90" width="22.6" height="8.10" fill="#1b7a4c"/><rect x="192.75" y="132.00" width="22.6" height="15.60" fill="#1fa065"/><rect x="192.75" y="147.60" width="22.6" height="13.60" fill="#27cc80"/><rect x="192.75" y="161.20" width="22.6" height="10.30" fill="#2af598"/><rect x="220.82" y="120.30" width="22.6" height="13.80" fill="#1b7a4c"/><rect x="220.82" y="134.10" width="22.6" height="15.80" fill="#1fa065"/><rect x="220.82" y="149.90" width="22.6" height="11.30" fill="#27cc80"/><rect x="220.82" y="161.20" width="22.6" height="10.30" fill="#2af598"/><rect x="248.89" y="44.10" width="22.6" height="34.90" fill="#1b7a4c"/><rect x="248.89" y="79.00" width="22.6" height="39.90" fill="#1fa065"/><rect x="248.89" y="118.90" width="22.6" height="16.10" fill="#27cc80"/><rect x="248.89" y="135.00" width="22.6" height="36.50" fill="#2af598"/><rect x="276.96" y="40.80" width="22.6" height="34.30" fill="#1b7a4c"/><rect x="276.96" y="75.10" width="22.6" height="35.30" fill="#1fa065"/><rect x="276.96" y="110.40" width="22.6" height="22.10" fill="#27cc80"/><rect x="276.96" y="132.50" width="22.6" height="39.00" fill="#2af598"/><rect x="305.03" y="42.30" width="22.6" height="44.50" fill="#1b7a4c"/><rect x="305.03" y="86.80" width="22.6" height="30.80" fill="#1fa065"/><rect x="305.03" y="117.60" width="22.6" height="25.50" fill="#27cc80"/><rect x="305.03" y="143.10" width="22.6" height="28.40" fill="#2af598"/><rect x="333.10" y="43.70" width="22.6" height="29.10" fill="#1b7a4c"/><rect x="333.10" y="72.80" width="22.6" height="30.50" fill="#1fa065"/><rect x="333.10" y="103.30" width="22.6" height="34.00" fill="#27cc80"/><rect x="333.10" y="137.30" width="22.6" height="34.20" fill="#2af598"/><rect x="361.17" y="40.80" width="22.6" height="28.00" fill="#1b7a4c"/><rect x="361.17" y="68.80" width="22.6" height="34.50" fill="#1fa065"/><rect x="361.17" y="103.30" width="22.6" height="37.60" fill="#27cc80"/><rect x="361.17" y="140.90" width="22.6" height="30.60" fill="#2af598"/><rect x="389.24" y="120.70" width="22.6" height="10.40" fill="#1b7a4c"/><rect x="389.24" y="131.10" width="22.6" height="14.30" fill="#1fa065"/><rect x="389.24" y="145.40" width="22.6" height="22.10" fill="#27cc80"/><rect x="389.24" y="167.50" width="22.6" height="4.00" fill="#2af598"/><rect x="417.31" y="119.40" width="22.6" height="11.10" fill="#1b7a4c"/><rect x="417.31" y="130.50" width="22.6" height="14.90" fill="#1fa065"/><rect x="417.31" y="145.40" width="22.6" height="15.80" fill="#27cc80"/><rect x="417.31" y="161.20" width="22.6" height="10.30" fill="#2af598"/><rect x="445.38" y="45.00" width="22.6" height="40.30" fill="#1b7a4c"/><rect x="445.38" y="85.30" width="22.6" height="22.10" fill="#1fa065"/><rect x="445.38" y="107.40" width="22.6" height="30.50" fill="#27cc80"/><rect x="445.38" y="137.90" width="22.6" height="33.60" fill="#2af598"/><rect x="473.45" y="44.10" width="22.6" height="26.20" fill="#1b7a4c"/><rect x="473.45" y="70.30" width="22.6" height="24.90" fill="#1fa065"/><rect x="473.45" y="95.20" width="22.6" height="44.10" fill="#27cc80"/><rect x="473.45" y="139.30" width="22.6" height="32.20" fill="#2af598"/><rect x="501.52" y="44.70" width="22.6" height="38.40" fill="#1b7a4c"/><rect x="501.52" y="83.10" width="22.6" height="36.50" fill="#1fa065"/><rect x="501.52" y="119.60" width="22.6" height="27.50" fill="#27cc80"/><rect x="501.52" y="147.10" width="22.6" height="24.40" fill="#2af598"/><rect x="529.59" y="43.70" width="22.6" height="30.40" fill="#1b7a4c"/><rect x="529.59" y="74.10" width="22.6" height="35.20" fill="#1fa065"/><rect x="529.59" y="109.30" width="22.6" height="36.50" fill="#27cc80"/><rect x="529.59" y="145.80" width="22.6" height="25.70" fill="#2af598"/><rect x="557.66" y="43.70" width="22.6" height="21.90" fill="#1b7a4c"/><rect x="557.66" y="65.60" width="22.6" height="30.00" fill="#1fa065"/><rect x="557.66" y="95.60" width="22.6" height="42.30" fill="#27cc80"/><rect x="557.66" y="137.90" width="22.6" height="33.60" fill="#2af598"/><rect x="585.73" y="118.10" width="22.6" height="17.80" fill="#1b7a4c"/><rect x="585.73" y="135.90" width="22.6" height="13.70" fill="#1fa065"/><rect x="585.73" y="149.60" width="22.6" height="17.80" fill="#27cc80"/><rect x="585.73" y="167.40" width="22.6" height="4.10" fill="#2af598"/><rect x="613.80" y="120.10" width="22.6" height="11.30" fill="#1b7a4c"/><rect x="613.80" y="131.40" width="22.6" height="14.40" fill="#1fa065"/><rect x="613.80" y="145.80" width="22.6" height="11.80" fill="#27cc80"/><rect x="613.80" y="157.60" width="22.6" height="13.90" fill="#2af598"/><rect x="641.87" y="44.70" width="22.6" height="42.50" fill="#1b7a4c"/><rect x="641.87" y="87.20" width="22.6" height="23.00" fill="#1fa065"/><rect x="641.87" y="110.20" width="22.6" height="37.10" fill="#27cc80"/><rect x="641.87" y="147.30" width="22.6" height="24.20" fill="#2af598"/><rect x="669.94" y="44.70" width="22.6" height="28.40" fill="#1b7a4c"/><rect x="669.94" y="73.10" width="22.6" height="32.40" fill="#1fa065"/><rect x="669.94" y="105.50" width="22.6" height="26.80" fill="#27cc80"/><rect x="669.94" y="132.30" width="22.6" height="39.20" fill="#2af598"/><rect x="698.01" y="43.70" width="22.6" height="39.70" fill="#1b7a4c"/><rect x="698.01" y="83.40" width="22.6" height="29.60" fill="#1fa065"/><rect x="698.01" y="113.00" width="22.6" height="28.70" fill="#27cc80"/><rect x="698.01" y="141.70" width="22.6" height="29.80" fill="#2af598"/><rect x="726.08" y="40.50" width="22.6" height="29.80" fill="#1b7a4c"/><rect x="726.08" y="70.30" width="22.6" height="25.90" fill="#1fa065"/><rect x="726.08" y="96.20" width="22.6" height="41.70" fill="#27cc80"/><rect x="726.08" y="137.90" width="22.6" height="33.60" fill="#2af598"/><rect x="754.15" y="44.70" width="22.6" height="26.70" fill="#1b7a4c"/><rect x="754.15" y="71.40" width="22.6" height="26.10" fill="#1fa065"/><rect x="754.15" y="97.50" width="22.6" height="31.80" fill="#27cc80"/><rect x="754.15" y="129.30" width="22.6" height="42.20" fill="#2af598"/><rect x="782.22" y="123.00" width="22.6" height="14.40" fill="#1b7a4c"/><rect x="782.22" y="137.40" width="22.6" height="14.00" fill="#1fa065"/><rect x="782.22" y="151.40" width="22.6" height="13.70" fill="#27cc80"/><rect x="782.22" y="165.10" width="22.6" height="6.40" fill="#2af598"/><rect x="810.29" y="118.10" width="22.6" height="12.70" fill="#1b7a4c"/><rect x="810.29" y="130.80" width="22.6" height="6.60" fill="#1fa065"/><rect x="810.29" y="137.40" width="22.6" height="12.70" fill="#27cc80"/><rect x="810.29" y="150.10" width="22.6" height="21.40" fill="#2af598"/><rect x="838.36" y="43.70" width="22.6" height="47.40" fill="#1b7a4c"/><rect x="838.36" y="91.10" width="22.6" height="19.10" fill="#1fa065"/><rect x="838.36" y="110.20" width="22.6" height="35.20" fill="#27cc80"/><rect x="838.36" y="145.40" width="22.6" height="26.10" fill="#2af598"/><rect x="866.43" y="37.20" width="22.6" height="32.40" fill="#1b7a4c"/><rect x="866.43" y="69.60" width="22.6" height="37.80" fill="#1fa065"/><rect x="866.43" y="107.40" width="22.6" height="24.90" fill="#27cc80"/><rect x="866.43" y="132.30" width="22.6" height="39.20" fill="#2af598"/><rect x="894.50" y="112.50" width="22.6" height="15.50" fill="#1b7a4c"/><rect x="894.50" y="128.00" width="22.6" height="17.30" fill="#1fa065"/><rect x="894.50" y="145.30" width="22.6" height="11.40" fill="#27cc80"/><rect x="894.50" y="156.70" width="22.6" height="14.80" fill="#2af598"/></svg>
<div style="position:absolute;left:2510px;top:1066.75px;width:950px;height:2.5px;background:rgb(3,9,8);border-radius:0px;mix-blend-mode:plus-lighter;"></div>
<div style="position:absolute;left:2510px;top:1143.45px;width:950px;height:2.5px;background:rgb(3,9,8);border-radius:0px;mix-blend-mode:plus-lighter;"></div>
<div style="position:absolute;left:2510px;top:1220.25px;width:950px;height:2.5px;background:rgb(3,9,8);border-radius:0px;mix-blend-mode:plus-lighter;"></div>
<div style="position:absolute;left:2521.34px;top:1246.93px;font:400 27.77px/27.77px 'Liberation Mono', monospace;color:#cccccc;white-space:nowrap;transform:scaleX(0.8636);transform-origin:0 0;-webkit-text-stroke:0.75px #cccccc;">Mar 02</div>
<div style="position:absolute;left:2633.62px;top:1246.93px;font:400 27.77px/27.77px 'Liberation Mono', monospace;color:#cccccc;white-space:nowrap;transform:scaleX(0.8636);transform-origin:0 0;-webkit-text-stroke:0.75px #cccccc;">Mar 06</div>
<div style="position:absolute;left:2745.90px;top:1246.93px;font:400 27.77px/27.77px 'Liberation Mono', monospace;color:#cccccc;white-space:nowrap;transform:scaleX(0.8636);transform-origin:0 0;-webkit-text-stroke:0.75px #cccccc;">Mar 10</div>
<div style="position:absolute;left:2858.19px;top:1246.93px;font:400 27.77px/27.77px 'Liberation Mono', monospace;color:#cccccc;white-space:nowrap;transform:scaleX(0.8548);transform-origin:0 0;-webkit-text-stroke:0.75px #cccccc;">Mar 14</div>
<div style="position:absolute;left:2970.46px;top:1246.93px;font:400 27.77px/27.77px 'Liberation Mono', monospace;color:#cccccc;white-space:nowrap;transform:scaleX(0.8636);transform-origin:0 0;-webkit-text-stroke:0.75px #cccccc;">Mar 18</div>
<div style="position:absolute;left:3082.74px;top:1246.93px;font:400 27.77px/27.77px 'Liberation Mono', monospace;color:#cccccc;white-space:nowrap;transform:scaleX(0.8636);transform-origin:0 0;-webkit-text-stroke:0.75px #cccccc;">Mar 22</div>
<div style="position:absolute;left:3195.02px;top:1246.93px;font:400 27.77px/27.77px 'Liberation Mono', monospace;color:#cccccc;white-space:nowrap;transform:scaleX(0.8636);transform-origin:0 0;-webkit-text-stroke:0.75px #cccccc;">Mar 26</div>
<div style="position:absolute;left:3307.30px;top:1246.93px;font:400 27.77px/27.77px 'Liberation Mono', monospace;color:#cccccc;white-space:nowrap;transform:scaleX(0.8636);transform-origin:0 0;-webkit-text-stroke:0.75px #cccccc;">Mar 30</div>
<div style="position:absolute;left:2398.00px;top:1359.83px;font:400 28.31px/28.31px 'Liberation Sans', sans-serif;color:#d4d4d4;white-space:nowrap;transform:scaleX(1.0627);transform-origin:0 0;-webkit-text-stroke:0.9px #d4d4d4;">Total Tokens</div>
<div style="position:absolute;left:2395.27px;top:1402.91px;font:400 53.11px/53.11px 'Liberation Mono', monospace;color:#f5f5f5;white-space:nowrap;transform:scaleX(0.9104);transform-origin:0 0;-webkit-text-stroke:0.7px #f5f5f5;">2,105,269 tokens</div>
<div style="position:absolute;left:2403.94px;top:1490.77px;font:400 27.31px/27.31px 'Liberation Mono', monospace;color:#c8c8c8;white-space:nowrap;transform:scaleX(0.8571);transform-origin:0 0;-webkit-text-stroke:0.4px #c8c8c8;">100000</div>
<div style="position:absolute;left:2418.14px;top:1561.07px;font:400 27.31px/27.31px 'Liberation Mono', monospace;color:#c8c8c8;white-space:nowrap;transform:scaleX(0.8551);transform-origin:0 0;-webkit-text-stroke:0.4px #c8c8c8;">50000</div>
<div style="position:absolute;left:2475.00px;top:1637.07px;font:400 27.31px/27.31px 'Liberation Mono', monospace;color:#c8c8c8;white-space:nowrap;transform:scaleX(0.8000);transform-origin:0 0;-webkit-text-stroke:0.4px #c8c8c8;">0</div>
<div style="position:absolute;left:2510px;top:1494.55px;width:950px;height:2.5px;background:rgb(25,25,37);border-radius:0px;"></div>
<div style="position:absolute;left:2510px;top:1571.55px;width:950px;height:2.5px;background:rgb(25,25,37);border-radius:0px;"></div>
<div style="position:absolute;left:2510px;top:1648.35px;width:950px;height:2.5px;background:rgb(25,25,37);border-radius:0px;"></div>
<svg style="position:absolute;left:2500px;top:1480px;" width="960" height="180" viewBox="0 0 960 180"><defs><linearGradient id="ga" x1="0" y1="0" x2="0" y2="1"><stop offset="0" stop-color="#2af598" stop-opacity="0.10"/><stop offset="1" stop-color="#2af598" stop-opacity="0.01"/></linearGradient></defs><path d="M49.30 88.00 C58.97 59.15 68.63 30.30 78.30 30.30 C87.97 30.30 97.63 44.90 107.30 44.90 C116.97 44.90 126.63 35.80 136.30 35.80 C145.97 35.80 155.63 36.40 165.30 37.60 C174.97 38.80 184.63 123.80 194.30 123.80 C203.97 123.80 213.63 122.87 223.30 121.00 C232.97 119.13 242.63 37.60 252.30 37.60 C261.97 37.60 271.63 45.80 281.30 45.80 C290.97 45.80 300.63 43.10 310.30 43.10 C319.97 43.10 329.63 44.90 339.30 44.90 C348.97 44.90 358.63 33.00 368.30 33.00 C377.97 33.00 387.63 114.60 397.30 114.60 C406.97 114.60 416.63 114.60 426.30 114.60 C435.97 114.60 445.63 44.00 455.30 44.00 C464.97 44.00 474.63 46.47 484.30 46.80 C493.97 47.13 503.63 47.30 513.30 47.30 C522.97 47.30 532.63 39.40 542.30 39.40 C551.97 39.40 561.63 41.87 571.30 46.80 C580.97 51.73 590.63 108.23 600.30 113.70 C609.97 119.17 619.63 121.90 629.30 121.90 C638.97 121.90 648.63 52.87 658.30 48.60 C667.97 44.33 677.63 43.47 687.30 42.20 C696.97 40.93 706.63 40.30 716.30 40.30 C725.97 40.30 735.63 41.73 745.30 42.20 C754.97 42.67 764.63 42.50 774.30 43.10 C783.97 43.70 793.63 113.03 803.30 115.50 C812.97 117.97 822.63 119.20 832.30 119.20 C841.97 119.20 851.63 41.80 861.30 39.40 C870.97 37.00 880.63 35.80 890.30 35.80 C899.97 35.80 909.63 72.90 919.30 110.00 L919.3 169.6 L49.3 169.6 Z" fill="url(#ga)"/><path d="M49.30 108.20 C58.97 91.25 68.63 74.30 78.30 74.30 C87.97 74.30 97.63 78.80 107.30 78.80 C116.97 78.80 126.63 63.97 136.30 63.30 C145.97 62.63 155.63 62.30 165.30 62.30 C174.97 62.30 184.63 128.63 194.30 131.10 C203.97 133.57 213.63 134.80 223.30 134.80 C232.97 134.80 242.63 74.30 252.30 74.30 C261.97 74.30 271.63 75.33 281.30 77.00 C290.97 78.67 300.63 84.30 310.30 84.30 C319.97 84.30 329.63 76.65 339.30 73.30 C348.97 69.95 358.63 64.20 368.30 64.20 C377.97 64.20 387.63 125.90 397.30 126.50 C406.97 127.10 416.63 127.40 426.30 127.40 C435.97 127.40 445.63 95.67 455.30 86.20 C464.97 76.73 474.63 70.60 484.30 70.60 C493.97 70.60 503.63 83.40 513.30 83.40 C522.97 83.40 532.63 71.20 542.30 70.60 C551.97 70.00 561.63 69.70 571.30 69.70 C580.97 69.70 590.63 135.70 600.30 135.70 C609.97 135.70 619.63 135.07 629.30 133.80 C638.97 132.53 648.63 98.23 658.30 88.00 C667.97 77.77 677.63 72.40 687.30 72.40 C696.97 72.40 706.63 81.60 716.30 81.60 C725.97 81.60 735.63 73.60 745.30 72.40 C754.97 71.20 764.63 70.60 774.30 70.60 C783.97 70.60 793.63 132.90 803.30 132.90 C812.97 132.90 822.63 132.60 832.30 132.00 C841.97 131.40 851.63 96.58 861.30 86.20 C870.97 75.82 880.63 69.70 890.30 69.70 C899.97 69.70 909.63 95.80 919.30 121.90 L919.3 169.6 L49.3 169.6 Z" fill="url(#ga)"/><path d="M49.30 128.30 C58.97 117.80 68.63 107.30 78.30 107.30 C87.97 107.30 97.63 109.10 107.30 109.10 C116.97 109.10 126.63 89.80 136.30 89.80 C145.97 89.80 155.63 93.17 165.30 99.90 C174.97 106.63 184.63 141.73 194.30 144.80 C203.97 147.87 213.63 149.40 223.30 149.40 C232.97 149.40 242.63 123.37 252.30 117.30 C261.97 111.23 271.63 108.20 281.30 108.20 C290.97 108.20 300.63 115.50 310.30 115.50 C319.97 115.50 329.63 107.85 339.30 105.40 C348.97 102.95 358.63 100.80 368.30 100.80 C377.97 100.80 387.63 141.20 397.30 141.20 C406.97 141.20 416.63 140.90 426.30 140.30 C435.97 139.70 445.63 117.50 455.30 110.00 C464.97 102.50 474.63 95.30 484.30 95.30 C493.97 95.30 503.63 119.20 513.30 119.20 C522.97 119.20 532.63 109.22 542.30 105.40 C551.97 101.58 561.63 96.30 571.30 96.30 C580.97 96.30 590.63 149.40 600.30 149.40 C609.97 149.40 619.63 148.50 629.30 146.70 C638.97 144.90 648.63 121.93 658.30 114.60 C667.97 107.27 677.63 102.70 687.30 102.70 C696.97 102.70 706.63 110.00 716.30 110.00 C725.97 110.00 735.63 99.30 745.30 98.10 C754.97 96.90 764.63 96.30 774.30 96.30 C783.97 96.30 793.63 147.60 803.30 147.60 C812.97 147.60 822.63 145.17 832.30 140.30 C841.97 135.43 851.63 107.30 861.30 107.30 C870.97 107.30 880.63 108.20 890.30 110.00 C899.97 111.80 909.63 126.95 919.30 142.10 L919.3 169.6 L49.3 169.6 Z" fill="url(#ga)"/><path d="M49.30 154.90 C58.97 144.35 68.63 133.80 78.30 133.80 C87.97 133.80 97.63 147.60 107.30 147.60 C116.97 147.60 126.63 132.00 136.30 132.00 C145.97 132.00 155.63 132.60 165.30 133.80 C174.97 135.00 184.63 157.10 194.30 157.70 C203.97 158.30 213.63 158.60 223.30 158.60 C232.97 158.60 242.63 136.20 252.30 133.80 C261.97 131.40 271.63 130.20 281.30 130.20 C290.97 130.20 300.63 140.30 310.30 140.30 C319.97 140.30 329.63 137.50 339.30 137.50 C348.97 137.50 358.63 139.33 368.30 143.00 C377.97 146.67 387.63 165.00 397.30 165.00 C406.97 165.00 416.63 162.43 426.30 157.70 C435.97 152.97 445.63 136.60 455.30 136.60 C464.97 136.60 474.63 137.20 484.30 138.40 C493.97 139.60 503.63 146.70 513.30 146.70 C522.97 146.70 532.63 144.38 542.30 143.00 C551.97 141.62 561.63 138.40 571.30 138.40 C580.97 138.40 590.63 165.00 600.30 165.00 C609.97 165.00 619.63 159.00 629.30 155.80 C638.97 152.60 648.63 150.38 658.30 145.80 C667.97 141.22 677.63 128.30 687.30 128.30 C696.97 128.30 706.63 134.80 716.30 136.60 C725.97 138.40 735.63 139.30 745.30 139.30 C754.97 139.30 764.63 125.60 774.30 125.60 C783.97 125.60 793.63 162.30 803.30 162.30 C812.97 162.30 822.63 154.67 832.30 151.30 C841.97 147.93 851.63 145.32 861.30 142.10 C870.97 138.88 880.63 132.00 890.30 132.00 C899.97 132.00 909.63 142.55 919.30 153.10 L919.3 169.6 L49.3 169.6 Z" fill="url(#ga)"/><path d="M49.30 88.00 C58.97 59.15 68.63 30.30 78.30 30.30 C87.97 30.30 97.63 44.90 107.30 44.90 C116.97 44.90 126.63 35.80 136.30 35.80 C145.97 35.80 155.63 36.40 165.30 37.60 C174.97 38.80 184.63 123.80 194.30 123.80 C203.97 123.80 213.63 122.87 223.30 121.00 C232.97 119.13 242.63 37.60 252.30 37.60 C261.97 37.60 271.63 45.80 281.30 45.80 C290.97 45.80 300.63 43.10 310.30 43.10 C319.97 43.10 329.63 44.90 339.30 44.90 C348.97 44.90 358.63 33.00 368.30 33.00 C377.97 33.00 387.63 114.60 397.30 114.60 C406.97 114.60 416.63 114.60 426.30 114.60 C435.97 114.60 445.63 44.00 455.30 44.00 C464.97 44.00 474.63 46.47 484.30 46.80 C493.97 47.13 503.63 47.30 513.30 47.30 C522.97 47.30 532.63 39.40 542.30 39.40 C551.97 39.40 561.63 41.87 571.30 46.80 C580.97 51.73 590.63 108.23 600.30 113.70 C609.97 119.17 619.63 121.90 629.30 121.90 C638.97 121.90 648.63 52.87 658.30 48.60 C667.97 44.33 677.63 43.47 687.30 42.20 C696.97 40.93 706.63 40.30 716.30 40.30 C725.97 40.30 735.63 41.73 745.30 42.20 C754.97 42.67 764.63 42.50 774.30 43.10 C783.97 43.70 793.63 113.03 803.30 115.50 C812.97 117.97 822.63 119.20 832.30 119.20 C841.97 119.20 851.63 41.80 861.30 39.40 C870.97 37.00 880.63 35.80 890.30 35.80 C899.97 35.80 909.63 72.90 919.30 110.00" stroke="#1fa466" stroke-width="3.8" fill="none" stroke-linejoin="round" stroke-linecap="round"/><path d="M49.30 108.20 C58.97 91.25 68.63 74.30 78.30 74.30 C87.97 74.30 97.63 78.80 107.30 78.80 C116.97 78.80 126.63 63.97 136.30 63.30 C145.97 62.63 155.63 62.30 165.30 62.30 C174.97 62.30 184.63 128.63 194.30 131.10 C203.97 133.57 213.63 134.80 223.30 134.80 C232.97 134.80 242.63 74.30 252.30 74.30 C261.97 74.30 271.63 75.33 281.30 77.00 C290.97 78.67 300.63 84.30 310.30 84.30 C319.97 84.30 329.63 76.65 339.30 73.30 C348.97 69.95 358.63 64.20 368.30 64.20 C377.97 64.20 387.63 125.90 397.30 126.50 C406.97 127.10 416.63 127.40 426.30 127.40 C435.97 127.40 445.63 95.67 455.30 86.20 C464.97 76.73 474.63 70.60 484.30 70.60 C493.97 70.60 503.63 83.40 513.30 83.40 C522.97 83.40 532.63 71.20 542.30 70.60 C551.97 70.00 561.63 69.70 571.30 69.70 C580.97 69.70 590.63 135.70 600.30 135.70 C609.97 135.70 619.63 135.07 629.30 133.80 C638.97 132.53 648.63 98.23 658.30 88.00 C667.97 77.77 677.63 72.40 687.30 72.40 C696.97 72.40 706.63 81.60 716.30 81.60 C725.97 81.60 735.63 73.60 745.30 72.40 C754.97 71.20 764.63 70.60 774.30 70.60 C783.97 70.60 793.63 132.90 803.30 132.90 C812.97 132.90 822.63 132.60 832.30 132.00 C841.97 131.40 851.63 96.58 861.30 86.20 C870.97 75.82 880.63 69.70 890.30 69.70 C899.97 69.70 909.63 95.80 919.30 121.90" stroke="#25c27b" stroke-width="3.8" fill="none" stroke-linejoin="round" stroke-linecap="round"/><path d="M49.30 128.30 C58.97 117.80 68.63 107.30 78.30 107.30 C87.97 107.30 97.63 109.10 107.30 109.10 C116.97 109.10 126.63 89.80 136.30 89.80 C145.97 89.80 155.63 93.17 165.30 99.90 C174.97 106.63 184.63 141.73 194.30 144.80 C203.97 147.87 213.63 149.40 223.30 149.40 C232.97 149.40 242.63 123.37 252.30 117.30 C261.97 111.23 271.63 108.20 281.30 108.20 C290.97 108.20 300.63 115.50 310.30 115.50 C319.97 115.50 329.63 107.85 339.30 105.40 C348.97 102.95 358.63 100.80 368.30 100.80 C377.97 100.80 387.63 141.20 397.30 141.20 C406.97 141.20 416.63 140.90 426.30 140.30 C435.97 139.70 445.63 117.50 455.30 110.00 C464.97 102.50 474.63 95.30 484.30 95.30 C493.97 95.30 503.63 119.20 513.30 119.20 C522.97 119.20 532.63 109.22 542.30 105.40 C551.97 101.58 561.63 96.30 571.30 96.30 C580.97 96.30 590.63 149.40 600.30 149.40 C609.97 149.40 619.63 148.50 629.30 146.70 C638.97 144.90 648.63 121.93 658.30 114.60 C667.97 107.27 677.63 102.70 687.30 102.70 C696.97 102.70 706.63 110.00 716.30 110.00 C725.97 110.00 735.63 99.30 745.30 98.10 C754.97 96.90 764.63 96.30 774.30 96.30 C783.97 96.30 793.63 147.60 803.30 147.60 C812.97 147.60 822.63 145.17 832.30 140.30 C841.97 135.43 851.63 107.30 861.30 107.30 C870.97 107.30 880.63 108.20 890.30 110.00 C899.97 111.80 909.63 126.95 919.30 142.10" stroke="#28db8b" stroke-width="3.8" fill="none" stroke-linejoin="round" stroke-linecap="round"/><path d="M49.30 154.90 C58.97 144.35 68.63 133.80 78.30 133.80 C87.97 133.80 97.63 147.60 107.30 147.60 C116.97 147.60 126.63 132.00 136.30 132.00 C145.97 132.00 155.63 132.60 165.30 133.80 C174.97 135.00 184.63 157.10 194.30 157.70 C203.97 158.30 213.63 158.60 223.30 158.60 C232.97 158.60 242.63 136.20 252.30 133.80 C261.97 131.40 271.63 130.20 281.30 130.20 C290.97 130.20 300.63 140.30 310.30 140.30 C319.97 140.30 329.63 137.50 339.30 137.50 C348.97 137.50 358.63 139.33 368.30 143.00 C377.97 146.67 387.63 165.00 397.30 165.00 C406.97 165.00 416.63 162.43 426.30 157.70 C435.97 152.97 445.63 136.60 455.30 136.60 C464.97 136.60 474.63 137.20 484.30 138.40 C493.97 139.60 503.63 146.70 513.30 146.70 C522.97 146.70 532.63 144.38 542.30 143.00 C551.97 141.62 561.63 138.40 571.30 138.40 C580.97 138.40 590.63 165.00 600.30 165.00 C609.97 165.00 619.63 159.00 629.30 155.80 C638.97 152.60 648.63 150.38 658.30 145.80 C667.97 141.22 677.63 128.30 687.30 128.30 C696.97 128.30 706.63 134.80 716.30 136.60 C725.97 138.40 735.63 139.30 745.30 139.30 C754.97 139.30 764.63 125.60 774.30 125.60 C783.97 125.60 793.63 162.30 803.30 162.30 C812.97 162.30 822.63 154.67 832.30 151.30 C841.97 147.93 851.63 145.32 861.30 142.10 C870.97 138.88 880.63 132.00 890.30 132.00 C899.97 132.00 909.63 142.55 919.30 153.10" stroke="#2af598" stroke-width="3.8" fill="none" stroke-linejoin="round" stroke-linecap="round"/></svg>
<div style="position:absolute;left:2510px;top:1494.55px;width:950px;height:2.5px;background:rgb(3,9,8);border-radius:0px;mix-blend-mode:plus-lighter;"></div>
<div style="position:absolute;left:2510px;top:1571.55px;width:950px;height:2.5px;background:rgb(3,9,8);border-radius:0px;mix-blend-mode:plus-lighter;"></div>
<div style="position:absolute;left:2510px;top:1648.35px;width:950px;height:2.5px;background:rgb(3,9,8);border-radius:0px;mix-blend-mode:plus-lighter;"></div>
<div style="position:absolute;left:2507.34px;top:1674.53px;font:400 27.77px/27.77px 'Liberation Mono', monospace;color:#cccccc;white-space:nowrap;transform:scaleX(0.8636);transform-origin:0 0;-webkit-text-stroke:0.75px #cccccc;">Mar 02</div>
<div style="position:absolute;left:2623.24px;top:1674.53px;font:400 27.77px/27.77px 'Liberation Mono', monospace;color:#cccccc;white-space:nowrap;transform:scaleX(0.8636);transform-origin:0 0;-webkit-text-stroke:0.75px #cccccc;">Mar 06</div>
<div style="position:absolute;left:2739.14px;top:1674.53px;font:400 27.77px/27.77px 'Liberation Mono', monospace;color:#cccccc;white-space:nowrap;transform:scaleX(0.8636);transform-origin:0 0;-webkit-text-stroke:0.75px #cccccc;">Mar 10</div>
<div style="position:absolute;left:2855.05px;top:1674.53px;font:400 27.77px/27.77px 'Liberation Mono', monospace;color:#cccccc;white-space:nowrap;transform:scaleX(0.8548);transform-origin:0 0;-webkit-text-stroke:0.75px #cccccc;">Mar 14</div>
<div style="position:absolute;left:2970.94px;top:1674.53px;font:400 27.77px/27.77px 'Liberation Mono', monospace;color:#cccccc;white-space:nowrap;transform:scaleX(0.8636);transform-origin:0 0;-webkit-text-stroke:0.75px #cccccc;">Mar 18</div>
<div style="position:absolute;left:3086.84px;top:1674.53px;font:400 27.77px/27.77px 'Liberation Mono', monospace;color:#cccccc;white-space:nowrap;transform:scaleX(0.8636);transform-origin:0 0;-webkit-text-stroke:0.75px #cccccc;">Mar 22</div>
<div style="position:absolute;left:3202.74px;top:1674.53px;font:400 27.77px/27.77px 'Liberation Mono', monospace;color:#cccccc;white-space:nowrap;transform:scaleX(0.8636);transform-origin:0 0;-webkit-text-stroke:0.75px #cccccc;">Mar 26</div>
<div style="position:absolute;left:3318.64px;top:1674.53px;font:400 27.77px/27.77px 'Liberation Mono', monospace;color:#cccccc;white-space:nowrap;transform:scaleX(0.8636);transform-origin:0 0;-webkit-text-stroke:0.75px #cccccc;">Mar 30</div>
<div style="position:absolute;left:144px;top:1538px;width:2189.5px;height:95px;background:#373737;border-radius:0px;"></div>
<svg style="position:absolute;left:176px;top:1570px;" width="34" height="34" viewBox="0 0 34 34"><circle cx="14.5" cy="14.5" r="10" stroke="#e4e4e4" stroke-width="2.9" fill="none"/><path d="M22 22 L28 28" stroke="#e4e4e4" stroke-width="2.9" stroke-linecap="round"/></svg>
<div style="position:absolute;left:222.85px;top:1573.10px;font:400 29.77px/29.77px 'Liberation Sans', sans-serif;color:#cdcdcd;white-space:nowrap;transform:scaleX(0.9469);transform-origin:0 0;-webkit-text-stroke:0.9px #cdcdcd;">Search conversations semantically...</div>
<svg style="position:absolute;left:2266.1px;top:1566px;" width="40" height="40" viewBox="0 0 40 40"><g transform="translate(20 20)"><path d="M0 -12.8 Q2.4 -2.4 12.8 0 Q2.4 2.4 0 12.8 Q-2.4 2.4 -12.8 0 Q-2.4 -2.4 0 -12.8 Z" stroke="#ececec" stroke-width="3.0" fill="none" stroke-linejoin="round"/><path d="M0 -3.6 Q0.5 -0.5 3.6 0 Q0.5 0.5 0 3.6 Q-0.5 0.5 -3.6 0 Q-0.5 -0.5 0 -3.6 Z" transform="translate(10.9 -9.3)" fill="#ececec" stroke="#ececec" stroke-width="1.2" stroke-linejoin="round"/><circle cx="-10.9" cy="8.1" r="2" fill="#ececec"/></g></svg>
<div style="position:absolute;left:144.50px;top:1699.83px;font:700 28.78px/28.78px 'Liberation Sans', sans-serif;color:#f5f5f5;white-space:nowrap;transform:scaleX(0.9438);transform-origin:0 0;-webkit-text-stroke:0.5px #f5f5f5;">Timestamp</div>
<div style="position:absolute;left:485.64px;top:1699.83px;font:700 28.78px/28.78px 'Liberation Sans', sans-serif;color:#f5f5f5;white-space:nowrap;transform:scaleX(0.9638);transform-origin:0 0;-webkit-text-stroke:0.5px #f5f5f5;">Model</div>
<div style="position:absolute;left:748.59px;top:1699.83px;font:700 28.78px/28.78px 'Liberation Sans', sans-serif;color:#f5f5f5;white-space:nowrap;transform:scaleX(0.9133);transform-origin:0 0;-webkit-text-stroke:0.5px #f5f5f5;">Provider</div>
<div style="position:absolute;left:930.47px;top:1699.83px;font:700 28.78px/28.78px 'Liberation Sans', sans-serif;color:#f5f5f5;white-space:nowrap;transform:scaleX(0.9265);transform-origin:0 0;-webkit-text-stroke:0.5px #f5f5f5;">Organization</div>
<div style="position:absolute;left:1223.48px;top:1699.83px;font:700 28.78px/28.78px 'Liberation Sans', sans-serif;color:#f5f5f5;white-space:nowrap;transform:scaleX(0.9212);transform-origin:0 0;-webkit-text-stroke:0.5px #f5f5f5;">Project</div>
<div style="position:absolute;left:1491.29px;top:1699.83px;font:700 28.78px/28.78px 'Liberation Sans', sans-serif;color:#f5f5f5;white-space:nowrap;transform:scaleX(0.9145);transform-origin:0 0;-webkit-text-stroke:0.5px #f5f5f5;">User</div>
<div style="position:absolute;left:1941.87px;top:1699.83px;font:700 28.78px/28.78px 'Liberation Sans', sans-serif;color:#f5f5f5;white-space:nowrap;transform:scaleX(0.9257);transform-origin:0 0;-webkit-text-stroke:0.5px #f5f5f5;">Prompt Tokens</div>
<div style="position:absolute;left:2196.60px;top:1699.83px;font:700 28.78px/28.78px 'Liberation Sans', sans-serif;color:#f5f5f5;white-space:nowrap;transform:scaleX(0.9000);transform-origin:0 0;-webkit-text-stroke:0.5px #f5f5f5;">Completion Tokens</div>
<div style="position:absolute;left:144.50px;top:1798.93px;font:400 28.78px/28.78px 'Liberation Sans', sans-serif;color:#f0f0f0;white-space:nowrap;transform:scaleX(0.9544);transform-origin:0 0;-webkit-text-stroke:0.5px #f0f0f0;">Apr 2, 2025 10:40:15</div>
<div style="position:absolute;left:485.63px;top:1798.93px;font:400 28.78px/28.78px 'Liberation Sans', sans-serif;color:#f0f0f0;white-space:nowrap;transform:scaleX(0.9711);transform-origin:0 0;-webkit-text-stroke:0.5px #f0f0f0;">gpt-4</div>
<div style="position:absolute;left:748.51px;top:1798.93px;font:400 28.78px/28.78px 'Liberation Sans', sans-serif;color:#f0f0f0;white-space:nowrap;transform:scaleX(0.9906);transform-origin:0 0;-webkit-text-stroke:0.5px #f0f0f0;">openai</div>
<div style="position:absolute;left:931.40px;top:1798.93px;font:400 28.78px/28.78px 'Liberation Sans', sans-serif;color:#f0f0f0;white-space:nowrap;transform:scaleX(0.9703);transform-origin:0 0;-webkit-text-stroke:0.5px #f0f0f0;">tech_dynamics</div>
<div style="position:absolute;left:1225.39px;top:1798.93px;font:400 28.78px/28.78px 'Liberation Sans', sans-serif;color:#f0f0f0;white-space:nowrap;transform:scaleX(0.9854);transform-origin:0 0;-webkit-text-stroke:0.5px #f0f0f0;">web_platform</div>
<div style="position:absolute;left:1491.24px;top:1798.93px;font:400 28.78px/28.78px 'Liberation Sans', sans-serif;color:#f0f0f0;white-space:nowrap;transform:scaleX(0.9569);transform-origin:0 0;-webkit-text-stroke:0.5px #f0f0f0;">alayna_koss</div>
<div style="position:absolute;left:1940.68px;top:1798.93px;font:400 28.78px/28.78px 'Liberation Sans', sans-serif;color:#f0f0f0;white-space:nowrap;transform:scaleX(1.0616);transform-origin:0 0;-webkit-text-stroke:0.5px #f0f0f0;">113</div>
<div style="position:absolute;left:2196.51px;top:1798.93px;font:400 28.78px/28.78px 'Liberation Sans', sans-serif;color:#f0f0f0;white-space:nowrap;transform:scaleX(0.9892);transform-origin:0 0;-webkit-text-stroke:0.5px #f0f0f0;">619</div>
<div style="position:absolute;left:144.50px;top:1904.33px;font:400 28.78px/28.78px 'Liberation Sans', sans-serif;color:#f0f0f0;white-space:nowrap;transform:scaleX(0.9544);transform-origin:0 0;-webkit-text-stroke:0.5px #f0f0f0;">Apr 2, 2025 10:38:15</div>
<div style="position:absolute;left:485.62px;top:1904.33px;font:400 28.78px/28.78px 'Liberation Sans', sans-serif;color:#f0f0f0;white-space:nowrap;transform:scaleX(0.9803);transform-origin:0 0;-webkit-text-stroke:0.5px #f0f0f0;">gpt-3.5-turbo</div>
<div style="position:absolute;left:748.51px;top:1904.33px;font:400 28.78px/28.78px 'Liberation Sans', sans-serif;color:#f0f0f0;white-space:nowrap;transform:scaleX(0.9906);transform-origin:0 0;-webkit-text-stroke:0.5px #f0f0f0;">openai</div>
<div style="position:absolute;left:931.40px;top:1904.33px;font:400 28.78px/28.78px 'Liberation Sans', sans-serif;color:#f0f0f0;white-space:nowrap;transform:scaleX(0.9786);transform-origin:0 0;-webkit-text-stroke:0.5px #f0f0f0;">future_retail</div>
<div style="position:absolute;left:1223.42px;top:1904.33px;font:400 28.78px/28.78px 'Liberation Sans', sans-serif;color:#f0f0f0;white-space:nowrap;transform:scaleX(0.9761);transform-origin:0 0;-webkit-text-stroke:0.5px #f0f0f0;">pos_system</div>
<div style="position:absolute;left:1491.23px;top:1904.33px;font:400 28.78px/28.78px 'Liberation Sans', sans-serif;color:#f0f0f0;white-space:nowrap;transform:scaleX(0.9746);transform-origin:0 0;-webkit-text-stroke:0.5px #f0f0f0;">amber51</div>
<div style="position:absolute;left:1940.73px;top:1904.33px;font:400 28.78px/28.78px 'Liberation Sans', sans-serif;color:#f0f0f0;white-space:nowrap;transform:scaleX(1.0356);transform-origin:0 0;-webkit-text-stroke:0.5px #f0f0f0;">155</div>
<div style="position:absolute;left:2197.50px;top:1904.33px;font:400 28.78px/28.78px 'Liberation Sans', sans-serif;color:#f0f0f0;white-space:nowrap;transform:scaleX(0.9852);transform-origin:0 0;-webkit-text-stroke:0.5px #f0f0f0;">478</div>
<div style="position:absolute;left:114px;top:1866px;width:2252px;height:2px;background:#1a2029;border-radius:0px;"></div>
<div style="position:absolute;left:114px;top:1972px;width:2252px;height:2px;background:#1a2029;border-radius:0px;"></div>
<div style="position:absolute;left:2366px;top:1700px;width:400px;height:276px;background:#0b0b0b;border-radius:0px;"></div>
<div style="position:absolute;left:144px;top:1856px;width:202px;height:96px;background:#282828;border-radius:0px;box-shadow:0 4px 12px rgba(0,0,0,0.5);"></div>
<div style="position:absolute;left:245.5px;top:1856px;width:100.5px;height:96px;background:#383838;border-radius:0px;"></div>
<div style="position:absolute;left:144px;top:1856px;width:6.5px;height:96px;background:#2af598;border-radius:0px;"></div>
<svg style="position:absolute;left:180px;top:1886px;" width="36" height="36" viewBox="0 0 36 36"><circle cx="18" cy="18" r="14" stroke="#e0e0e0" stroke-width="2.4" fill="none"/><path d="M13.5 14 Q13.5 9.5 18 9.5 Q22.5 9.5 22.5 13.5 Q22.5 16 19.5 17.5 Q18 18.3 18 21" stroke="#e0e0e0" stroke-width="2.4" fill="none" stroke-linecap="round"/><circle cx="18" cy="25.5" r="1.6" fill="#e0e0e0"/></svg>
<svg style="position:absolute;left:282px;top:1889px;" width="28" height="28" viewBox="0 0 28 28"><path d="M14 6 V22 M6 14 H22" stroke="#f0f0f0" stroke-width="3.4" stroke-linecap="butt"/></svg>
<div style="position:absolute;left:2366px;top:1750px;width:182px;height:68px;background:#282828;border-radius:0px;"></div>
<div style="position:absolute;left:2366px;top:1813.5px;width:182px;height:4.5px;background:#2af598;border-radius:0px;"></div>
<div style="position:absolute;left:2416.58px;top:1767.31px;font:400 29.04px/29.04px 'Liberation Sans', sans-serif;color:#f2f2f2;white-space:nowrap;transform:scaleX(1.0103);transform-origin:0 0;-webkit-text-stroke:0.9px #f2f2f2;">Model</div>
<div style="position:absolute;left:2586.76px;top:1767.31px;font:400 29.04px/29.04px 'Liberation Sans', sans-serif;color:#d4d4d4;white-space:nowrap;transform:scaleX(0.9677);transform-origin:0 0;-webkit-text-stroke:0.9px #d4d4d4;">Provider</div>
<div style="position:absolute;left:2763.03px;top:1767.31px;font:400 29.04px/29.04px 'Liberation Sans', sans-serif;color:#d4d4d4;white-space:nowrap;transform:scaleX(0.9695);transform-origin:0 0;-webkit-text-stroke:0.9px #d4d4d4;">Organization</div>
<div style="position:absolute;left:2999.02px;top:1767.31px;font:400 29.04px/29.04px 'Liberation Sans', sans-serif;color:#d4d4d4;white-space:nowrap;transform:scaleX(0.9911);transform-origin:0 0;-webkit-text-stroke:0.9px #d4d4d4;">Project</div>
<div style="position:absolute;left:3166.56px;top:1767.31px;font:400 29.04px/29.04px 'Liberation Sans', sans-serif;color:#d4d4d4;white-space:nowrap;transform:scaleX(0.9695);transform-origin:0 0;-webkit-text-stroke:0.9px #d4d4d4;">Environment</div>
<div style="position:absolute;left:3418.54px;top:1767.31px;font:400 29.04px/29.04px 'Liberation Sans', sans-serif;color:#d4d4d4;white-space:nowrap;transform:scaleX(0.9325);transform-origin:0 0;-webkit-text-stroke:0.9px #d4d4d4;">User</div>
<div style="position:absolute;left:2396.89px;top:1856.57px;font:400 26.25px/26.25px 'Liberation Sans', sans-serif;color:#d4d4d4;white-space:nowrap;transform:scaleX(0.9106);transform-origin:0 0;-webkit-text-stroke:0.8px #d4d4d4;">Cost Breakdown</div>
<div style="position:absolute;left:3260.50px;top:1846.71px;font:400 53.11px/53.11px 'Liberation Mono', monospace;color:#f5f5f5;white-space:nowrap;transform:scaleX(0.9004);transform-origin:0 0;-webkit-text-stroke:0.7px #f5f5f5;">$66.285</div>
<svg style="position:absolute;left:2406px;top:1946px;" width="32" height="32" viewBox="0 0 32 32"><path transform="scale(1.3333)" d="M22.2819 9.8211a5.9847 5.9847 0 0 0-.5157-4.9108 6.0462 6.0462 0 0 0-6.5098-2.9A6.0651 6.0651 0 0 0 4.9807 4.1818a5.9847 5.9847 0 0 0-3.9977 2.9 6.0462 6.0462 0 0 0 .7427 7.0966 5.98 5.98 0 0 0 .511 4.9107 6.051 6.051 0 0 0 6.5146 2.9001A5.9847 5.9847 0 0 0 13.2599 24a6.0557 6.0557 0 0 0 5.7718-4.2058 5.9894 5.9894 0 0 0 3.9977-2.9001 6.0557 6.0557 0 0 0-.7475-7.0729zm-9.022 12.6081a4.4755 4.4755 0 0 1-2.8764-1.0408l.1419-.0804 4.7783-2.7582a.7948.7948 0 0 0 .3927-.6813v-6.7369l2.02 1.1686a.071.071 0 0 1 .038.052v5.5826a4.504 4.504 0 0 1-4.4945 4.4944zm-9.6607-4.1254a4.4708 4.4708 0 0 1-.5346-3.0137l.142.0852 4.783 2.7582a.7712.7712 0 0 0 .7806 0l5.8428-3.3685v2.3324a.0804.0804 0 0 1-.0332.0615L9.74 19.9502a4.4992 4.4992 0 0 1-6.1408-1.6464zM2.3408 7.8956a4.485 4.485 0 0 1 2.3655-1.9728V11.6a.7664.7664 0 0 0 .3879.6765l5.8144 3.3543-2.0201 1.1685a.0757.0757 0 0 1-.071 0l-4.8303-2.7865A4.504 4.504 0 0 1 2.3408 7.872zm16.5963 3.8558L13.1038 8.364 15.1192 7.2a.0757.0757 0 0 1 .071 0l4.8303 2.7913a4.4944 4.4944 0 0 1-.6765 8.1042v-5.6772a.79.79 0 0 0-.407-.667zm2.0107-3.0231l-.142-.0852-4.7735-2.7818a.7759.7759 0 0 0-.7854 0L9.409 9.2297V6.8974a.0662.0662 0 0 1 .0284-.0615l4.8303-2.7866a4.4992 4.4992 0 0 1 6.6802 4.66zM8.3065 12.863l-2.02-1.1638a.0804.0804 0 0 1-.038-.0567V6.0742a4.4992 4.4992 0 0 1 7.3757-3.4537l-.142.0805L8.704 5.459a.7948.7948 0 0 0-.3927.6813zm1.0976-2.3654l2.602-1.4998 2.6069 1.4998v2.9994l-2.5974 1.4997-2.6067-1.4997Z" fill="#cfcfcf"/></svg>
<div style="position:absolute;left:2457.00px;top:1950.54px;font:400 23.34px/23.34px 'Liberation Sans', sans-serif;color:#d4d4d4;white-space:nowrap;transform:scaleX(1.0527);transform-origin:0 0;-webkit-text-stroke:0.8px #d4d4d4;">gpt-4</div>
<div style="position:absolute;left:3373.00px;top:1948.69px;font:400 25.52px/25.52px 'Liberation Sans', sans-serif;color:#d4d4d4;white-space:nowrap;transform:scaleX(0.9424);transform-origin:0 0;-webkit-text-stroke:0.8px #d4d4d4;">$26.842</div>
</body></html>
